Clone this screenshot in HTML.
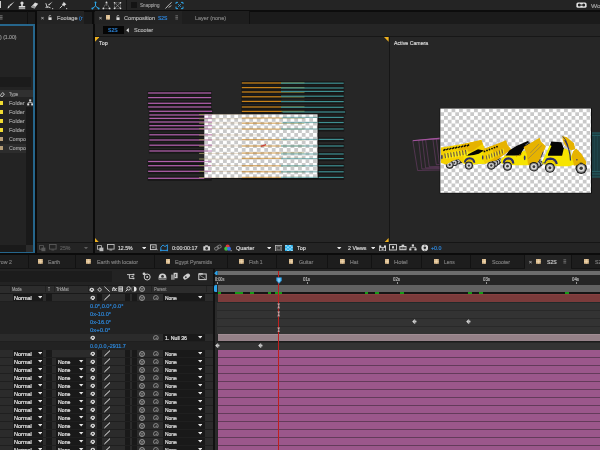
<!DOCTYPE html>
<html><head><meta charset="utf-8"><title>After Effects</title>
<style>
html,body{margin:0;padding:0;background:#0b0b0b;}
#r{position:relative;width:600px;height:450px;overflow:hidden;background:#0b0b0b;filter:blur(0.3px);font-family:"Liberation Sans",sans-serif;font-size:6px;color:#a8a8a8;}
.a{position:absolute;display:block}
.t{position:absolute;white-space:nowrap;line-height:8px;height:8px;transform-origin:0 50%;-webkit-text-stroke:0.2px;}
</style></head><body><div id="r">
<div class="a" style="left:0px;top:0px;width:600px;height:10.4px;background:#242424;"></div>
<div class="a" style="left:0px;top:10.4px;width:600px;height:1.2px;background:#0c0c0c;"></div>
<div class="a" style="left:0px;top:11.6px;width:600px;height:12.4px;background:#1b1b1b;"></div>
<svg class="a" style="left:7.2px;top:0.8px;" width="8" height="9" viewBox="0 0 8 9"><path d="M7.5 0.5 L3.5 5 L2.5 4 Z" fill="#ddd"/><path d="M0.5 7.5 Q2 7.5 3 5 L2 4.2 Q0.8 5.5 0.5 7.5Z" fill="#ddd"/></svg>
<svg class="a" style="left:18px;top:0.8px;" width="8" height="9" viewBox="0 0 8 9"><circle cx="4" cy="2" r="1.6" fill="#ddd"/><rect x="3.2" y="3" width="1.6" height="2.4" fill="#ddd"/><rect x="0.8" y="5" width="6.4" height="1.6" fill="#ddd"/><rect x="0.8" y="7.3" width="6.4" height="0.8" fill="#ddd"/></svg>
<svg class="a" style="left:30px;top:0.8px;" width="9" height="9" viewBox="0 0 9 9"><path d="M1 6 L5 1.5 L8.2 2.8 L4.4 7.4 Z" fill="#ddd"/><path d="M1 6 L2.6 4.3 L5.8 5.7 L4.4 7.4Z" fill="#999"/></svg>
<svg class="a" style="left:44.5px;top:0.8px;" width="9" height="9" viewBox="0 0 9 9"><path d="M7.8 0.5 L4 4.5 L3 3.8 Z" fill="#ddd"/><path d="M0.8 2.2 L2.4 6.8 M0.5 6.4 Q3 5 5.5 6.8" stroke="#ddd" stroke-width="0.9" fill="none"/><rect x="7" y="7" width="1.2" height="1.2" fill="#aaa"/></svg>
<svg class="a" style="left:59px;top:0.8px;" width="9" height="9" viewBox="0 0 9 9"><path d="M4.6 0.8 L7.4 3.4 L6 4 L5.4 5.6 L2.6 3 L4.2 2.4 Z" fill="#ddd"/><path d="M3.6 4.4 L0.8 7.2" stroke="#ddd" stroke-width="0.9"/><rect x="7" y="7" width="1.2" height="1.2" fill="#aaa"/></svg>
<div class="a" style="left:0px;top:1px;width:1.2px;height:7px;background:#cfcfcf;"></div>
<svg class="a" style="left:91px;top:1px;" width="9" height="9" viewBox="0 0 9 9"><path d="M4.5 1.2 V5 L1.5 7.4 M4.5 5 L7.5 7.4" stroke="#2ea5e6" stroke-width="1" fill="none"/><circle cx="4.5" cy="1.4" r="1" fill="#2ea5e6"/><circle cx="1.4" cy="7.4" r="1" fill="#2ea5e6"/><circle cx="7.6" cy="7.4" r="1" fill="#2ea5e6"/></svg>
<svg class="a" style="left:102px;top:1px;" width="9" height="9" viewBox="0 0 9 9"><path d="M4.5 1.2 L1.5 7.4 H7.5 Z M4.5 1.2 V5" stroke="#a8a8a8" stroke-width="0.6" fill="none" stroke-dasharray="1 0.6"/><circle cx="4.5" cy="1.4" r="0.9" fill="#ddd"/><circle cx="1.4" cy="7.4" r="0.9" fill="#ddd"/><circle cx="7.6" cy="7.4" r="0.9" fill="#ddd"/></svg>
<svg class="a" style="left:112.5px;top:1px;" width="9" height="9" viewBox="0 0 9 9"><rect x="1.5" y="1.8" width="6" height="5.6" stroke="#a8a8a8" stroke-width="0.6" fill="none" stroke-dasharray="1 0.6"/><path d="M1.5 1.8 L7.5 7.4 M7.5 1.8 L1.5 7.4" stroke="#a0a0a0" stroke-width="0.6"/><circle cx="1.5" cy="1.8" r="0.8" fill="#ddd"/><circle cx="7.5" cy="1.8" r="0.8" fill="#ddd"/><circle cx="1.5" cy="7.4" r="0.8" fill="#ddd"/><circle cx="7.5" cy="7.4" r="0.8" fill="#ddd"/></svg>
<div class="a" style="left:125.5px;top:0px;width:0.6px;height:10px;background:#161616;"></div>
<div class="a" style="left:131px;top:1.5px;width:6px;height:6px;background:#141414;"></div>
<span class="t" style="left:139.5px;top:1.4px;font-size:6px;color:#999999;transform:scaleX(0.769);">Snapping</span>
<svg class="a" style="left:163.5px;top:0.8px;" width="9" height="9" viewBox="0 0 9 9"><path d="M1.5 7.5 L5.5 3.2 L7.6 1.4" stroke="#cfcfcf" stroke-width="0.9" fill="none"/><path d="M4.6 6.4 L7.4 4.6" stroke="#cfcfcf" stroke-width="0.8"/></svg>
<svg class="a" style="left:175px;top:0.8px;" width="9" height="9" viewBox="0 0 9 9"><path d="M1 3 V1.4 H3 M6 1.4 H8 V3 M8 5.6 V7.6 H6 M3 7.6 H1 V5.6" stroke="#2ea5e6" stroke-width="1" fill="none"/><path d="M3 3 L6 6 M6 3 L3 6" stroke="#2ea5e6" stroke-width="0.7"/></svg>
<svg class="a" style="left:575.5px;top:2.4px;" width="11" height="7" viewBox="0 0 11 7"><rect x="0.4" y="0.4" width="10.2" height="5.4" rx="1.6" fill="#e6e6e6"/><circle cx="3.3" cy="3.1" r="1.5" fill="#222"/><circle cx="7.7" cy="3.1" r="1.5" fill="#222"/><rect x="4.4" y="2.6" width="2.2" height="1" fill="#222"/></svg>
<span class="t" style="left:591px;top:2px;font-size:6px;color:#a0a0a0;transform:scaleX(1.102);">Wor</span>
<div class="a" style="left:0px;top:23.9px;width:34.8px;height:229.7px;background:#26668c;"></div>
<div class="a" style="left:0px;top:25.7px;width:33px;height:226.1px;background:#232323;"></div>
<svg class="a" style="left:0px;top:15.4px;" width="3" height="5" viewBox="0 0 3 5"><path d="M0 0.8 H2.6 M0 2.4 H2.6 M0 4 H2.6" stroke="#8a8a8a" stroke-width="0.8"/></svg>
<div class="a" style="left:26.5px;top:11px;width:0.6px;height:13px;background:#101010;"></div>
<span class="t" style="left:-0.5px;top:32.6px;font-size:6px;color:#9a9a9a;transform:scaleX(0.853);">) (1.00)</span>
<div class="a" style="left:0px;top:77.3px;width:31px;height:9.4px;background:#1b1b1b;"></div>
<div class="a" style="left:0px;top:90px;width:33px;height:7.4px;background:#303030;"></div>
<svg class="a" style="left:0px;top:90.5px;" width="5" height="6.5" viewBox="0 0 5 6.5"><path d="M0.2 4.6 L2.6 1.6 L4.4 3 L2 6 Z" stroke="#c8c8c8" stroke-width="0.9" fill="none"/></svg>
<span class="t" style="left:8.6px;top:90px;font-size:5.6px;color:#9c9c9c;transform:scaleX(0.758);">Type</span>
<div class="a" style="left:26px;top:106.5px;width:7px;height:138.5px;background:#191919;"></div>
<svg class="a" style="left:26.6px;top:99.2px;" width="6.4" height="7" viewBox="0 0 6.4 7"><rect x="2.2" y="0.4" width="2" height="2" fill="#ddd"/><rect x="0.2" y="4.4" width="2" height="2" fill="#ddd"/><rect x="4.2" y="4.4" width="2" height="2" fill="#ddd"/><path d="M3.2 2.4 V3.6 M1.2 4.4 V3.5 H5.2 V4.4" stroke="#ddd" stroke-width="0.6" fill="none"/></svg>
<div class="a" style="left:0px;top:144.2px;width:26px;height:8.4px;background:#2c2c2c;"></div>
<div class="a" style="left:0px;top:101.3px;width:3.2px;height:4.2px;background:#f0dc32;"></div>
<span class="t" style="left:9px;top:99.4px;font-size:6px;color:#9c9c9c;transform:scaleX(0.917);">Folder</span>
<div class="a" style="left:0px;top:110.3px;width:3.2px;height:4.2px;background:#f0dc32;"></div>
<span class="t" style="left:9px;top:108.4px;font-size:6px;color:#9c9c9c;transform:scaleX(0.917);">Folder</span>
<div class="a" style="left:0px;top:119.3px;width:3.2px;height:4.2px;background:#f0dc32;"></div>
<span class="t" style="left:9px;top:117.4px;font-size:6px;color:#9c9c9c;transform:scaleX(0.917);">Folder</span>
<div class="a" style="left:0px;top:128.3px;width:3.2px;height:4.2px;background:#f0dc32;"></div>
<span class="t" style="left:9px;top:126.4px;font-size:6px;color:#9c9c9c;transform:scaleX(0.917);">Folder</span>
<div class="a" style="left:0px;top:137.3px;width:3.2px;height:4.2px;background:#b89f78;"></div>
<span class="t" style="left:9px;top:135.4px;font-size:6px;color:#9c9c9c;transform:scaleX(0.869);">Compo</span>
<div class="a" style="left:0px;top:146.3px;width:3.2px;height:4.2px;background:#b89f78;"></div>
<span class="t" style="left:9px;top:144.4px;font-size:6px;color:#9c9c9c;transform:scaleX(0.869);">Compo</span>
<div class="a" style="left:0px;top:245px;width:33px;height:6.8px;background:#1a1a1a;"></div>
<div class="a" style="left:26px;top:245px;width:7px;height:6.8px;background:#2b2b2b;"></div>
<div class="a" style="left:34.5px;top:11px;width:2px;height:243px;background:#0b0b0b;"></div>
<div class="a" style="left:92.3px;top:11px;width:2.1px;height:243px;background:#0b0b0b;"></div>
<div class="a" style="left:36.5px;top:11px;width:47px;height:13px;background:#232323;"></div>
<div class="a" style="left:36.5px;top:24px;width:56px;height:218.4px;background:#262626;"></div>
<span class="t" style="left:41px;top:13.6px;font-size:6px;color:#9a9a9a;transform:scaleX(0.856);">×</span>
<svg class="a" style="left:48.4px;top:15px;" width="4.2" height="5.4" viewBox="0 0 5 6.5"><path d="M1.2 3 V1.8 Q1.2 0.5 2.4 0.5 Q3.4 0.5 3.6 1.4" stroke="#d8d8d8" stroke-width="0.8" fill="none"/><rect x="0.5" y="2.8" width="3.8" height="3.2" fill="#d8d8d8"/></svg>
<span class="t" style="left:56.5px;top:13.6px;font-size:6px;color:#b4b4b4;transform:scaleX(0.931);">Footage</span>
<span class="t" style="left:78.8px;top:13.6px;font-size:6px;color:#2d7fd0;transform:scaleX(0.901);">(r</span>
<div class="a" style="left:36.5px;top:242.4px;width:56px;height:0.8px;background:#151515;"></div>
<div class="a" style="left:36.5px;top:243.2px;width:56px;height:9.4px;background:#242424;"></div>
<svg class="a" style="left:38.6px;top:244.6px;" width="7" height="7" viewBox="0 0 7 7"><rect x="0.5" y="0.6" width="4" height="3.6" fill="none" stroke="#5a5a5a" stroke-width="0.8"/><rect x="2.4" y="2.6" width="4" height="3.6" fill="#5a5a5a"/></svg>
<svg class="a" style="left:48.6px;top:244.4px;" width="8" height="7" viewBox="0 0 8 7"><rect x="0.5" y="0.5" width="6.6" height="4.6" fill="none" stroke="#5a5a5a" stroke-width="0.9"/><rect x="2.4" y="5.6" width="2.8" height="0.8" fill="#5a5a5a"/></svg>
<span class="t" style="left:60.4px;top:244.2px;font-size:6px;color:#5c5c5c;transform:scaleX(0.874);">25%</span>
<svg class="a" style="left:83.6px;top:247px;" width="4" height="2.4" viewBox="0 0 4 2.4"><path d="M0 0 H4 L2.0 2.4 Z" fill="#5e5e5e"/></svg>
<div class="a" style="left:94.5px;top:11px;width:87.5px;height:13px;background:#232323;"></div>
<div class="a" style="left:182px;top:11px;width:67px;height:13px;background:#1e1e1e;"></div>
<div class="a" style="left:249px;top:11px;width:0.6px;height:13px;background:#111;"></div>
<div class="a" style="left:94.5px;top:24px;width:505.5px;height:12px;background:#252525;"></div>
<div class="a" style="left:94.5px;top:36px;width:505.5px;height:1px;background:#171717;"></div>
<span class="t" style="left:98.6px;top:13.6px;font-size:6px;color:#9a9a9a;transform:scaleX(0.856);">×</span>
<svg class="a" style="left:105.6px;top:15.2px;" width="4.6" height="4.6" viewBox="0 0 4.6 4.6"><rect width="4.6" height="4.6" fill="#d8b98c"/><path d="M2.3 0 V4.6 M0 2.3 H4.6" stroke="#f3dfbd" stroke-width="0.5"/></svg>
<svg class="a" style="left:116.2px;top:15px;" width="4.2" height="5.4" viewBox="0 0 5 6.5"><path d="M1.2 3 V1.8 Q1.2 0.5 2.4 0.5 Q3.4 0.5 3.6 1.4" stroke="#d8d8d8" stroke-width="0.8" fill="none"/><rect x="0.5" y="2.8" width="3.8" height="3.2" fill="#d8d8d8"/></svg>
<span class="t" style="left:124.4px;top:13.6px;font-size:6px;color:#b4b4b4;transform:scaleX(0.930);">Composition</span>
<span class="t" style="left:157.8px;top:13.6px;font-size:6px;color:#2d86dc;transform:scaleX(0.829);">S2S</span>
<svg class="a" style="left:174.6px;top:15.4px;" width="3.6" height="5" viewBox="0 0 3.6 5"><path d="M0.4 0.8 H3.2 M0.4 2.4 H3.2 M0.4 4 H3.2" stroke="#8a8a8a" stroke-width="0.7"/></svg>
<span class="t" style="left:195px;top:13.6px;font-size:6px;color:#808080;transform:scaleX(0.911);">Layer (none)</span>
<div class="a" style="left:103px;top:26.4px;width:21px;height:7.8px;background:#050505;"></div>
<span class="t" style="left:108px;top:26.4px;font-size:6px;color:#2d86dc;transform:scaleX(0.846);">S2S</span>
<svg class="a" style="left:126.4px;top:28.2px;" width="3" height="4.4" viewBox="0 0 3 4.4"><path d="M2.8 0 V4.4 L0.2 2.2 Z" fill="#dcdcdc"/></svg>
<span class="t" style="left:134.2px;top:26.4px;font-size:6px;color:#b0b0b0;transform:scaleX(0.929);">Scooter</span>
<div class="a" style="left:94.5px;top:37px;width:294px;height:205.4px;background:#262626;"></div>
<div class="a" style="left:388.5px;top:37px;width:1.2px;height:205.4px;background:#161616;"></div>
<div class="a" style="left:389.7px;top:37px;width:210.3px;height:205.4px;background:#262626;"></div>
<div class="a" style="left:94.5px;top:242.4px;width:505.5px;height:0.8px;background:#151515;"></div>
<div class="a" style="left:94.5px;top:243.2px;width:505.5px;height:9.4px;background:#242424;"></div>
<span class="t" style="left:99.2px;top:38.8px;font-size:6px;color:#d8d8d8;transform:scaleX(0.889);">Top</span>
<span class="t" style="left:394.4px;top:38.8px;font-size:6px;color:#d8d8d8;transform:scaleX(0.869);">Active Camera</span>
<svg class="a" style="left:94.5px;top:37px;" width="4.4" height="4.8" viewBox="0 0 4.4 4.8"><path d="M0 0 H4.4 L0 4.8 Z" fill="#eeb01e"/></svg>
<svg class="a" style="left:384px;top:37px;" width="4.6" height="4.8" viewBox="0 0 4.6 4.8"><path d="M0 0 H4.6 V4.8 Z" fill="#eeb01e"/></svg>
<svg class="a" style="left:94.5px;top:237.6px;" width="4.4" height="4.8" viewBox="0 0 4.4 4.8"><path d="M0 0 L4.4 4.8 H0 Z" fill="#eeb01e"/></svg>
<svg class="a" style="left:384px;top:237.6px;" width="4.6" height="4.8" viewBox="0 0 4.6 4.8"><path d="M4.6 0 V4.8 H0 Z" fill="#eeb01e"/></svg>
<svg class="a" style="left:94.5px;top:37px;" width="294" height="205.4" viewBox="94.5 37 294 205.4"><defs><pattern id="ck" x="203.8" y="114.3" width="7.5" height="7.5" patternUnits="userSpaceOnUse"><rect width="7.5" height="7.5" fill="#fff"/><rect x="3.75" width="3.75" height="3.75" fill="#c9c9c9"/><rect y="3.75" width="3.75" height="3.75" fill="#c9c9c9"/></pattern><clipPath id="cc"><rect x="203.8" y="114.3" width="113.19999999999999" height="63.7"/></clipPath></defs><g><rect x="147.1" y="91.1" width="64.1" height="4.4" fill="#171717"/><rect x="147.1" y="95.7" width="64.1" height="4.4" fill="#171717"/><rect x="147.1" y="101.4" width="64.1" height="4.4" fill="#171717"/><rect x="147.1" y="105.1" width="64.1" height="4.4" fill="#171717"/><rect x="148.3" y="109.4" width="63.8" height="4.4" fill="#171717"/><rect x="148.3" y="113.1" width="63.8" height="4.4" fill="#171717"/><rect x="148.3" y="116.5" width="63.8" height="4.4" fill="#171717"/><rect x="148.3" y="120.1" width="63.8" height="4.4" fill="#171717"/><rect x="148.3" y="123.8" width="63.8" height="4.4" fill="#171717"/><rect x="148.3" y="127.1" width="63.8" height="4.4" fill="#171717"/><rect x="148.3" y="132.9" width="63.8" height="4.4" fill="#171717"/><rect x="148.3" y="138.1" width="63.8" height="4.4" fill="#171717"/><rect x="148.3" y="143.3" width="63.8" height="4.4" fill="#171717"/><rect x="148.3" y="149.1" width="63.8" height="4.4" fill="#171717"/><rect x="147.1" y="159.6" width="64.1" height="4.4" fill="#171717"/><rect x="147.1" y="163.8" width="64.1" height="4.4" fill="#171717"/><rect x="147.1" y="169.4" width="64.1" height="4.4" fill="#171717"/><rect x="147.1" y="176.4" width="64.1" height="4.4" fill="#171717"/><rect x="240.8" y="81.1" width="40.2" height="4.4" fill="#171717"/><rect x="240.8" y="85.7" width="40.2" height="4.4" fill="#171717"/><rect x="240.8" y="90.1" width="40.2" height="4.4" fill="#171717"/><rect x="240.8" y="94.9" width="40.2" height="4.4" fill="#171717"/><rect x="240.8" y="99.5" width="40.2" height="4.4" fill="#171717"/><rect x="240.8" y="105.1" width="40.2" height="4.4" fill="#171717"/><rect x="240.8" y="109.5" width="40.2" height="4.4" fill="#171717"/><rect x="240.8" y="116.1" width="40.2" height="4.4" fill="#171717"/><rect x="240.8" y="121.3" width="40.2" height="4.4" fill="#171717"/><rect x="240.8" y="127.2" width="40.2" height="4.4" fill="#171717"/><rect x="240.8" y="137.7" width="40.2" height="4.4" fill="#171717"/><rect x="240.8" y="144.1" width="40.2" height="4.4" fill="#171717"/><rect x="240.8" y="151.1" width="40.2" height="4.4" fill="#171717"/><rect x="240.8" y="156.5" width="40.2" height="4.4" fill="#171717"/><rect x="240.8" y="163.9" width="40.2" height="4.4" fill="#171717"/><rect x="240.8" y="169.9" width="40.2" height="4.4" fill="#171717"/><rect x="240.8" y="175.5" width="40.2" height="4.4" fill="#171717"/><rect x="280" y="81.3" width="63.7" height="4.4" fill="#171717"/><rect x="280" y="86.1" width="63.7" height="4.4" fill="#171717"/><rect x="280" y="89.5" width="63.7" height="4.4" fill="#171717"/><rect x="280" y="94.3" width="63.7" height="4.4" fill="#171717"/><rect x="280" y="99.7" width="63.7" height="4.4" fill="#171717"/><rect x="280" y="105.4" width="63.7" height="4.4" fill="#171717"/><rect x="281.5" y="110.1" width="63.6" height="4.4" fill="#171717"/><rect x="281.5" y="115.5" width="62.2" height="4.4" fill="#171717"/><rect x="281.5" y="120.6" width="62.2" height="4.4" fill="#171717"/><rect x="280" y="127.1" width="63.7" height="4.4" fill="#171717"/><rect x="280" y="137.5" width="63.7" height="4.4" fill="#171717"/><rect x="280" y="144.1" width="63.7" height="4.4" fill="#171717"/><rect x="280" y="152.1" width="63.7" height="4.4" fill="#171717"/><rect x="280" y="156.7" width="63.7" height="4.4" fill="#171717"/><rect x="280" y="163.9" width="63.7" height="4.4" fill="#171717"/><rect x="280" y="169.9" width="63.7" height="4.4" fill="#171717"/><rect x="280" y="175.5" width="63.7" height="4.4" fill="#171717"/></g><g><rect x="147.6" y="92.375" width="63.1" height="1.25" fill="#b05fab"/><rect x="147.6" y="96.975" width="63.1" height="1.25" fill="#b05fab"/><rect x="147.6" y="102.675" width="63.1" height="1.25" fill="#b05fab"/><rect x="147.6" y="106.375" width="63.1" height="1.25" fill="#b05fab"/><rect x="148.8" y="110.675" width="62.8" height="1.25" fill="#b05fab"/><rect x="148.8" y="114.375" width="62.8" height="1.25" fill="#b05fab"/><rect x="148.8" y="117.775" width="62.8" height="1.25" fill="#b05fab"/><rect x="148.8" y="121.375" width="62.8" height="1.25" fill="#b05fab"/><rect x="148.8" y="125.075" width="62.8" height="1.25" fill="#b05fab"/><rect x="148.8" y="128.375" width="62.8" height="1.25" fill="#b05fab"/><rect x="148.8" y="134.175" width="62.8" height="1.25" fill="#b05fab"/><rect x="148.8" y="139.375" width="62.8" height="1.25" fill="#b05fab"/><rect x="148.8" y="144.575" width="62.8" height="1.25" fill="#b05fab"/><rect x="148.8" y="150.375" width="62.8" height="1.25" fill="#b05fab"/><rect x="147.6" y="160.875" width="63.1" height="1.25" fill="#b05fab"/><rect x="147.6" y="165.075" width="63.1" height="1.25" fill="#b05fab"/><rect x="147.6" y="170.675" width="63.1" height="1.25" fill="#b05fab"/><rect x="147.6" y="177.675" width="63.1" height="1.25" fill="#b05fab"/><rect x="241.3" y="82.375" width="39.2" height="1.25" fill="#c98219"/><rect x="280.5" y="82.38" width="23.5" height="1.25" fill="#8a8a40"/><rect x="241.3" y="86.975" width="39.2" height="1.25" fill="#c98219"/><rect x="280.5" y="86.98" width="23.5" height="1.25" fill="#8a8a40"/><rect x="241.3" y="91.375" width="39.2" height="1.25" fill="#c98219"/><rect x="280.5" y="91.38" width="23.5" height="1.25" fill="#8a8a40"/><rect x="241.3" y="96.175" width="39.2" height="1.25" fill="#c98219"/><rect x="280.5" y="96.18" width="23.5" height="1.25" fill="#8a8a40"/><rect x="241.3" y="100.775" width="39.2" height="1.25" fill="#c98219"/><rect x="280.5" y="100.78" width="23.5" height="1.25" fill="#8a8a40"/><rect x="241.3" y="106.375" width="39.2" height="1.25" fill="#c98219"/><rect x="280.5" y="106.38" width="23.5" height="1.25" fill="#8a8a40"/><rect x="241.3" y="110.775" width="39.2" height="1.25" fill="#c98219"/><rect x="280.5" y="110.78" width="23.5" height="1.25" fill="#8a8a40"/><rect x="241.3" y="117.375" width="39.2" height="1.25" fill="#c98219"/><rect x="280.5" y="117.38" width="23.5" height="1.25" fill="#8a8a40"/><rect x="241.3" y="122.575" width="39.2" height="1.25" fill="#c98219"/><rect x="280.5" y="122.58" width="23.5" height="1.25" fill="#8a8a40"/><rect x="241.3" y="128.475" width="39.2" height="1.25" fill="#c98219"/><rect x="280.5" y="128.48" width="23.5" height="1.25" fill="#8a8a40"/><rect x="241.3" y="138.975" width="39.2" height="1.25" fill="#c98219"/><rect x="280.5" y="138.98" width="23.5" height="1.25" fill="#8a8a40"/><rect x="241.3" y="145.375" width="39.2" height="1.25" fill="#c98219"/><rect x="280.5" y="145.38" width="23.5" height="1.25" fill="#8a8a40"/><rect x="241.3" y="152.375" width="39.2" height="1.25" fill="#c98219"/><rect x="280.5" y="152.38" width="23.5" height="1.25" fill="#8a8a40"/><rect x="241.3" y="157.775" width="39.2" height="1.25" fill="#c98219"/><rect x="280.5" y="157.78" width="23.5" height="1.25" fill="#8a8a40"/><rect x="241.3" y="165.175" width="39.2" height="1.25" fill="#c98219"/><rect x="280.5" y="165.18" width="23.5" height="1.25" fill="#8a8a40"/><rect x="241.3" y="171.175" width="39.2" height="1.25" fill="#c98219"/><rect x="280.5" y="171.18" width="23.5" height="1.25" fill="#8a8a40"/><rect x="241.3" y="176.775" width="39.2" height="1.25" fill="#c98219"/><rect x="280.5" y="176.78" width="23.5" height="1.25" fill="#8a8a40"/><rect x="280.5" y="82.6" width="62.7" height="1.2" fill="#3e8f91"/><rect x="280.5" y="87.4" width="62.7" height="1.2" fill="#3e8f91"/><rect x="280.5" y="90.8" width="62.7" height="1.2" fill="#3e8f91"/><rect x="280.5" y="95.6" width="62.7" height="1.2" fill="#3e8f91"/><rect x="280.5" y="101" width="62.7" height="1.2" fill="#3e8f91"/><rect x="280.5" y="106.7" width="62.7" height="1.2" fill="#3e8f91"/><rect x="282" y="111.4" width="62.6" height="1.2" fill="#3e8f91"/><rect x="282" y="116.8" width="61.2" height="1.2" fill="#3e8f91"/><rect x="282" y="121.9" width="61.2" height="1.2" fill="#3e8f91"/><rect x="280.5" y="128.4" width="62.7" height="1.2" fill="#3e8f91"/><rect x="280.5" y="138.8" width="62.7" height="1.2" fill="#3e8f91"/><rect x="280.5" y="145.4" width="62.7" height="1.2" fill="#3e8f91"/><rect x="280.5" y="153.4" width="62.7" height="1.2" fill="#3e8f91"/><rect x="280.5" y="158" width="62.7" height="1.2" fill="#3e8f91"/><rect x="280.5" y="165.2" width="62.7" height="1.2" fill="#3e8f91"/><rect x="280.5" y="171.2" width="62.7" height="1.2" fill="#3e8f91"/><rect x="280.5" y="176.8" width="62.7" height="1.2" fill="#3e8f91"/><rect x="198.6" y="114" width="5.4" height="1" fill="#8f8a58"/><rect x="198.6" y="118.2" width="5.4" height="1" fill="#8f8a58"/><rect x="198.6" y="122.5" width="5.4" height="1" fill="#8f8a58"/><rect x="198.6" y="128.1" width="5.4" height="1" fill="#8f8a58"/><rect x="198.6" y="134.5" width="5.4" height="1" fill="#8f8a58"/><rect x="198.6" y="139.2" width="5.4" height="1" fill="#8f8a58"/><rect x="198.6" y="145.5" width="5.4" height="1" fill="#8f8a58"/><rect x="198.6" y="152.9" width="5.4" height="1" fill="#8f8a58"/><rect x="198.6" y="158.5" width="5.4" height="1" fill="#8f8a58"/><rect x="198.6" y="165" width="5.4" height="1" fill="#8f8a58"/><rect x="198.6" y="171" width="5.4" height="1" fill="#8f8a58"/><rect x="198.6" y="177.1" width="5.4" height="1" fill="#8f8a58"/></g><rect x="203.8" y="114.3" width="114.19999999999999" height="64.5" fill="#0e0e0e"/><rect x="203.8" y="114.3" width="113.19999999999999" height="63.7" fill="url(#ck)"/><g clip-path="url(#cc)" opacity="0.28"><rect x="204" y="114" width="58" height="1" fill="#b08a50"/><rect x="204" y="118.2" width="58" height="1" fill="#b08a50"/><rect x="204" y="122.5" width="58" height="1" fill="#b08a50"/><rect x="204" y="128.1" width="58" height="1" fill="#b08a50"/><rect x="204" y="134.5" width="58" height="1" fill="#b08a50"/><rect x="204" y="139.2" width="58" height="1" fill="#b08a50"/><rect x="204" y="145.5" width="58" height="1" fill="#b08a50"/><rect x="204" y="152.9" width="58" height="1" fill="#b08a50"/><rect x="204" y="158.5" width="58" height="1" fill="#b08a50"/><rect x="204" y="165" width="58" height="1" fill="#b08a50"/><rect x="204" y="171" width="58" height="1" fill="#b08a50"/><rect x="204" y="177.1" width="58" height="1" fill="#b08a50"/></g><g clip-path="url(#cc)" opacity="0.6"><rect x="147.6" y="92.375" width="63.1" height="1.25" fill="#b05fab"/><rect x="147.6" y="96.975" width="63.1" height="1.25" fill="#b05fab"/><rect x="147.6" y="102.675" width="63.1" height="1.25" fill="#b05fab"/><rect x="147.6" y="106.375" width="63.1" height="1.25" fill="#b05fab"/><rect x="148.8" y="110.675" width="62.8" height="1.25" fill="#b05fab"/><rect x="148.8" y="114.375" width="62.8" height="1.25" fill="#b05fab"/><rect x="148.8" y="117.775" width="62.8" height="1.25" fill="#b05fab"/><rect x="148.8" y="121.375" width="62.8" height="1.25" fill="#b05fab"/><rect x="148.8" y="125.075" width="62.8" height="1.25" fill="#b05fab"/><rect x="148.8" y="128.375" width="62.8" height="1.25" fill="#b05fab"/><rect x="148.8" y="134.175" width="62.8" height="1.25" fill="#b05fab"/><rect x="148.8" y="139.375" width="62.8" height="1.25" fill="#b05fab"/><rect x="148.8" y="144.575" width="62.8" height="1.25" fill="#b05fab"/><rect x="148.8" y="150.375" width="62.8" height="1.25" fill="#b05fab"/><rect x="147.6" y="160.875" width="63.1" height="1.25" fill="#b05fab"/><rect x="147.6" y="165.075" width="63.1" height="1.25" fill="#b05fab"/><rect x="147.6" y="170.675" width="63.1" height="1.25" fill="#b05fab"/><rect x="147.6" y="177.675" width="63.1" height="1.25" fill="#b05fab"/><rect x="241.3" y="82.375" width="39.2" height="1.25" fill="#c98219"/><rect x="280.5" y="82.38" width="23.5" height="1.25" fill="#8a8a40"/><rect x="241.3" y="86.975" width="39.2" height="1.25" fill="#c98219"/><rect x="280.5" y="86.98" width="23.5" height="1.25" fill="#8a8a40"/><rect x="241.3" y="91.375" width="39.2" height="1.25" fill="#c98219"/><rect x="280.5" y="91.38" width="23.5" height="1.25" fill="#8a8a40"/><rect x="241.3" y="96.175" width="39.2" height="1.25" fill="#c98219"/><rect x="280.5" y="96.18" width="23.5" height="1.25" fill="#8a8a40"/><rect x="241.3" y="100.775" width="39.2" height="1.25" fill="#c98219"/><rect x="280.5" y="100.78" width="23.5" height="1.25" fill="#8a8a40"/><rect x="241.3" y="106.375" width="39.2" height="1.25" fill="#c98219"/><rect x="280.5" y="106.38" width="23.5" height="1.25" fill="#8a8a40"/><rect x="241.3" y="110.775" width="39.2" height="1.25" fill="#c98219"/><rect x="280.5" y="110.78" width="23.5" height="1.25" fill="#8a8a40"/><rect x="241.3" y="117.375" width="39.2" height="1.25" fill="#c98219"/><rect x="280.5" y="117.38" width="23.5" height="1.25" fill="#8a8a40"/><rect x="241.3" y="122.575" width="39.2" height="1.25" fill="#c98219"/><rect x="280.5" y="122.58" width="23.5" height="1.25" fill="#8a8a40"/><rect x="241.3" y="128.475" width="39.2" height="1.25" fill="#c98219"/><rect x="280.5" y="128.48" width="23.5" height="1.25" fill="#8a8a40"/><rect x="241.3" y="138.975" width="39.2" height="1.25" fill="#c98219"/><rect x="280.5" y="138.98" width="23.5" height="1.25" fill="#8a8a40"/><rect x="241.3" y="145.375" width="39.2" height="1.25" fill="#c98219"/><rect x="280.5" y="145.38" width="23.5" height="1.25" fill="#8a8a40"/><rect x="241.3" y="152.375" width="39.2" height="1.25" fill="#c98219"/><rect x="280.5" y="152.38" width="23.5" height="1.25" fill="#8a8a40"/><rect x="241.3" y="157.775" width="39.2" height="1.25" fill="#c98219"/><rect x="280.5" y="157.78" width="23.5" height="1.25" fill="#8a8a40"/><rect x="241.3" y="165.175" width="39.2" height="1.25" fill="#c98219"/><rect x="280.5" y="165.18" width="23.5" height="1.25" fill="#8a8a40"/><rect x="241.3" y="171.175" width="39.2" height="1.25" fill="#c98219"/><rect x="280.5" y="171.18" width="23.5" height="1.25" fill="#8a8a40"/><rect x="241.3" y="176.775" width="39.2" height="1.25" fill="#c98219"/><rect x="280.5" y="176.78" width="23.5" height="1.25" fill="#8a8a40"/><rect x="280.5" y="82.6" width="62.7" height="1.2" fill="#3e8f91"/><rect x="280.5" y="87.4" width="62.7" height="1.2" fill="#3e8f91"/><rect x="280.5" y="90.8" width="62.7" height="1.2" fill="#3e8f91"/><rect x="280.5" y="95.6" width="62.7" height="1.2" fill="#3e8f91"/><rect x="280.5" y="101" width="62.7" height="1.2" fill="#3e8f91"/><rect x="280.5" y="106.7" width="62.7" height="1.2" fill="#3e8f91"/><rect x="282" y="111.4" width="62.6" height="1.2" fill="#3e8f91"/><rect x="282" y="116.8" width="61.2" height="1.2" fill="#3e8f91"/><rect x="282" y="121.9" width="61.2" height="1.2" fill="#3e8f91"/><rect x="280.5" y="128.4" width="62.7" height="1.2" fill="#3e8f91"/><rect x="280.5" y="138.8" width="62.7" height="1.2" fill="#3e8f91"/><rect x="280.5" y="145.4" width="62.7" height="1.2" fill="#3e8f91"/><rect x="280.5" y="153.4" width="62.7" height="1.2" fill="#3e8f91"/><rect x="280.5" y="158" width="62.7" height="1.2" fill="#3e8f91"/><rect x="280.5" y="165.2" width="62.7" height="1.2" fill="#3e8f91"/><rect x="280.5" y="171.2" width="62.7" height="1.2" fill="#3e8f91"/><rect x="280.5" y="176.8" width="62.7" height="1.2" fill="#3e8f91"/><rect x="198.6" y="114" width="5.4" height="1" fill="#8f8a58"/><rect x="198.6" y="118.2" width="5.4" height="1" fill="#8f8a58"/><rect x="198.6" y="122.5" width="5.4" height="1" fill="#8f8a58"/><rect x="198.6" y="128.1" width="5.4" height="1" fill="#8f8a58"/><rect x="198.6" y="134.5" width="5.4" height="1" fill="#8f8a58"/><rect x="198.6" y="139.2" width="5.4" height="1" fill="#8f8a58"/><rect x="198.6" y="145.5" width="5.4" height="1" fill="#8f8a58"/><rect x="198.6" y="152.9" width="5.4" height="1" fill="#8f8a58"/><rect x="198.6" y="158.5" width="5.4" height="1" fill="#8f8a58"/><rect x="198.6" y="165" width="5.4" height="1" fill="#8f8a58"/><rect x="198.6" y="171" width="5.4" height="1" fill="#8f8a58"/><rect x="198.6" y="177.1" width="5.4" height="1" fill="#8f8a58"/></g><path d="M260.4 146.4 L265.6 144.6" stroke="#c8413a" stroke-width="1.2"/></svg>
<svg class="a" style="left:389.7px;top:37px;" width="210.3" height="205.4" viewBox="389.7 37 210.3 205.4"><defs><pattern id="ck2" x="440" y="108.5" width="7.5" height="7.5" patternUnits="userSpaceOnUse"><rect width="7.5" height="7.5" fill="#fff"/><rect x="3.75" width="3.75" height="3.75" fill="#c9c9c9"/><rect y="3.75" width="3.75" height="3.75" fill="#c9c9c9"/></pattern></defs><path d="M440 138.0 L412.5 140.7 L417.3 170.5 L440 170.0" stroke="#8a4786" stroke-width="0.7" fill="none" opacity="0.62"/><path d="M440 138.3 L418.4 140.3 L421.6 169.0 L440 168.5" stroke="#8a4786" stroke-width="0.7" fill="none" opacity="0.62"/><path d="M440 138.5 L422.1 140.0 L425.3 167.9 L440 167.4" stroke="#8a4786" stroke-width="0.7" fill="none" opacity="0.62"/><path d="M440 138.7 L425.3 139.8 L429.0 166.8 L440 166.3" stroke="#8a4786" stroke-width="0.7" fill="none" opacity="0.62"/><path d="M440 138.9 L432.6 139.3 L436.0 164.7 L440 164.4" stroke="#8a4786" stroke-width="0.7" fill="none" opacity="0.62"/><path d="M440 139.0 L436.0 139.0 L439.0 163.2 L440 163.0" stroke="#8a4786" stroke-width="0.7" fill="none" opacity="0.62"/><path d="M412.5 140.7 L440 138.2" stroke="#a555a0" stroke-width="1"/><rect x="591.4" y="132.4" width="9" height="45.2" fill="#1b3a3e"/><path d="M591.4 133 H600 M591.4 135.4 H600 M591.4 171.4 H600 M591.4 174 H600 M591.4 177 H600" stroke="#2a686d" stroke-width="0.8"/><path d="M594 136 V171 M597 136 V171" stroke="#224e53" stroke-width="0.7"/><rect x="439.4" y="108.1" width="152.30000000000004" height="85.30000000000001" fill="#0c0c0c"/><rect x="440" y="108.5" width="150.70000000000005" height="84.30000000000001" fill="url(#ck2)"/><circle cx="460" cy="160.6" r="2.6" fill="#1a1a1a"/><circle cx="460" cy="160.6" r="2.028" fill="#8c8c8c"/><circle cx="460" cy="160.6" r="1.508" fill="#dedede"/><circle cx="460" cy="160.6" r="0.78" fill="#3a3a3a"/><circle cx="457.4" cy="161.5" r="3" fill="#1a1a1a"/><circle cx="457.4" cy="161.5" r="2.34" fill="#8c8c8c"/><circle cx="457.4" cy="161.5" r="1.74" fill="#dedede"/><circle cx="457.4" cy="161.5" r="0.9" fill="#3a3a3a"/><circle cx="454" cy="162.7" r="3.4" fill="#1a1a1a"/><circle cx="454" cy="162.7" r="2.652" fill="#8c8c8c"/><circle cx="454" cy="162.7" r="1.972" fill="#dedede"/><circle cx="454" cy="162.7" r="1.02" fill="#3a3a3a"/><circle cx="449.4" cy="164.8" r="3.9" fill="#1a1a1a"/><circle cx="449.4" cy="164.8" r="3.042" fill="#8c8c8c"/><circle cx="449.4" cy="164.8" r="2.262" fill="#dedede"/><circle cx="449.4" cy="164.8" r="1.17" fill="#3a3a3a"/><polygon points="440.6,147.6 450,146 467.6,143 481,140 482.4,143.6 485.5,151 486,163.6 470,164.4 463,163.6 458,159 452,161 446,164.4 440.6,163" fill="#f3cf00" /><path d="M442 146 L481 138.6 M446 143.6 L476 138" stroke="#d8d8e4" stroke-width="0.6" opacity="0.8"/><ellipse cx="441.6" cy="157" rx="0.8" ry="2.2" fill="#2c2e6a"/><polygon points="462,144.2 481,140 482.4,143.8 472,151 464,152 458,150" fill="#e6b300" /><polygon points="463.3,156 467,152.5 478,151 486,151.5 486,163.6 470,164.4 463.3,163.4" fill="#f6e400" /><polygon points="466,155.2 471.8,152.2 477.7,149.2 483.8,150.4 478.5,153.8 473.5,155 467,155.8" fill="#050505" /><path d="M443 150.6 l2.2 -1.5" stroke="#0a0a0a" stroke-width="1.4"/><path d="M445.95 150.04 l2.2 -1.5" stroke="#0a0a0a" stroke-width="1.4"/><path d="M448.9 149.48 l2.2 -1.5" stroke="#0a0a0a" stroke-width="1.4"/><path d="M451.85 148.92 l2.2 -1.5" stroke="#0a0a0a" stroke-width="1.4"/><path d="M454.8 148.36 l2.2 -1.5" stroke="#0a0a0a" stroke-width="1.4"/><path d="M457.75 147.8 l2.2 -1.5" stroke="#0a0a0a" stroke-width="1.4"/><path d="M460.7 147.24 l2.2 -1.5" stroke="#0a0a0a" stroke-width="1.4"/><path d="M463.65 146.68 l2.2 -1.5" stroke="#0a0a0a" stroke-width="1.4"/><path d="M466.6 146.12 l2.2 -1.5" stroke="#0a0a0a" stroke-width="1.4"/><path d="M445.8 152.9 l0.8 6" stroke="#f8ee20" stroke-width="1.1"/><path d="M444.5 153.5 l0.7 4.6" stroke="#2c2e6a" stroke-width="0.9" opacity="0.85"/><path d="M448.75 152.4 l0.8 6" stroke="#f8ee20" stroke-width="1.1"/><path d="M447.45 153 l0.7 4.6" stroke="#2c2e6a" stroke-width="0.9" opacity="0.85"/><path d="M451.7 151.9 l0.8 6" stroke="#f8ee20" stroke-width="1.1"/><path d="M450.4 152.5 l0.7 4.6" stroke="#2c2e6a" stroke-width="0.9" opacity="0.85"/><path d="M454.65 151.4 l0.8 6" stroke="#f8ee20" stroke-width="1.1"/><path d="M453.35 152 l0.7 4.6" stroke="#2c2e6a" stroke-width="0.9" opacity="0.85"/><path d="M457.6 150.9 l0.8 6" stroke="#f8ee20" stroke-width="1.1"/><path d="M456.3 151.5 l0.7 4.6" stroke="#2c2e6a" stroke-width="0.9" opacity="0.85"/><path d="M460.55 150.4 l0.8 6" stroke="#f8ee20" stroke-width="1.1"/><path d="M459.25 151 l0.7 4.6" stroke="#2c2e6a" stroke-width="0.9" opacity="0.85"/><path d="M463.5 149.9 l0.8 6" stroke="#f8ee20" stroke-width="1.1"/><path d="M462.2 150.5 l0.7 4.6" stroke="#2c2e6a" stroke-width="0.9" opacity="0.85"/><path d="M466.45 149.4 l0.8 6" stroke="#f8ee20" stroke-width="1.1"/><path d="M465.15 150 l0.7 4.6" stroke="#2c2e6a" stroke-width="0.9" opacity="0.85"/><path d="M464.6 162.6 Q465 158.4 469.4 158.2 Q473.6 158.4 474 162.8" stroke="#2c2e6a" stroke-width="2.1" fill="none"/><path d="M465.6 163 Q466 160.2 469.4 160.2 Q472.6 160.2 473 163" stroke="#e0b000" stroke-width="1" fill="none"/><circle cx="468.6" cy="165.6" r="4" fill="#1a1a1a"/><circle cx="468.6" cy="165.6" r="3.12" fill="#8c8c8c"/><circle cx="468.6" cy="165.6" r="2.32" fill="#dedede"/><circle cx="468.6" cy="165.6" r="1.2" fill="#3a3a3a"/><ellipse cx="482.6" cy="157.4" rx="0.9" ry="2.2" fill="#2c2e6a"/><circle cx="499" cy="160.8" r="2.6" fill="#1a1a1a"/><circle cx="499" cy="160.8" r="2.028" fill="#8c8c8c"/><circle cx="499" cy="160.8" r="1.508" fill="#dedede"/><circle cx="499" cy="160.8" r="0.78" fill="#3a3a3a"/><circle cx="497" cy="162" r="3" fill="#1a1a1a"/><circle cx="497" cy="162" r="2.34" fill="#8c8c8c"/><circle cx="497" cy="162" r="1.74" fill="#dedede"/><circle cx="497" cy="162" r="0.9" fill="#3a3a3a"/><circle cx="494.5" cy="163.4" r="3.4" fill="#1a1a1a"/><circle cx="494.5" cy="163.4" r="2.652" fill="#8c8c8c"/><circle cx="494.5" cy="163.4" r="1.972" fill="#dedede"/><circle cx="494.5" cy="163.4" r="1.02" fill="#3a3a3a"/><circle cx="491" cy="165.6" r="4.1" fill="#1a1a1a"/><circle cx="491" cy="165.6" r="3.198" fill="#8c8c8c"/><circle cx="491" cy="165.6" r="2.378" fill="#dedede"/><circle cx="491" cy="165.6" r="1.23" fill="#3a3a3a"/><path d="M486 146.4 L506 139 M490 143 L503 138.4" stroke="#d8d8e4" stroke-width="0.6" opacity="0.8"/><polygon points="483.4,148.8 505.8,140.3 507.4,145 511,149.6 501,156.8 496,160.5 490,161.5 485,163.5 483.4,160" fill="#e6b300" /><polygon points="483.4,150 492,147 494,158 486,163.4 483.4,161" fill="#f3cf00" /><circle cx="484.2" cy="151.4" r="0.9" fill="#0a0a0a"/><circle cx="486.7" cy="150.45" r="0.9" fill="#0a0a0a"/><circle cx="489.2" cy="149.5" r="0.9" fill="#0a0a0a"/><circle cx="491.7" cy="148.55" r="0.9" fill="#0a0a0a"/><circle cx="494.2" cy="147.6" r="0.9" fill="#0a0a0a"/><circle cx="496.7" cy="146.65" r="0.9" fill="#0a0a0a"/><path d="M487.2 154.7 l0.7 5" stroke="#f8e820" stroke-width="1"/><path d="M486 155.5 l0.6 4" stroke="#2c2e6a" stroke-width="0.8" opacity="0.85"/><path d="M489.8 153.7 l0.7 5" stroke="#f8e820" stroke-width="1"/><path d="M488.6 154.5 l0.6 4" stroke="#2c2e6a" stroke-width="0.8" opacity="0.85"/><path d="M492.4 152.7 l0.7 5" stroke="#f8e820" stroke-width="1"/><path d="M491.2 153.5 l0.6 4" stroke="#2c2e6a" stroke-width="0.8" opacity="0.85"/><path d="M495 151.7 l0.7 5" stroke="#f8e820" stroke-width="1"/><path d="M493.8 152.5 l0.6 4" stroke="#2c2e6a" stroke-width="0.8" opacity="0.85"/><path d="M497.6 150.7 l0.7 5" stroke="#f8e820" stroke-width="1"/><path d="M496.4 151.5 l0.6 4" stroke="#2c2e6a" stroke-width="0.8" opacity="0.85"/><path d="M500.2 149.7 l0.7 5" stroke="#f8e820" stroke-width="1"/><path d="M499 150.5 l0.6 4" stroke="#2c2e6a" stroke-width="0.8" opacity="0.85"/><path d="M502.8 148.7 l0.7 5" stroke="#f8e820" stroke-width="1"/><path d="M501.6 149.5 l0.6 4" stroke="#2c2e6a" stroke-width="0.8" opacity="0.85"/><polygon points="500.6,159 505.3,155.2 515.5,155.2 524,150.6 529.5,156 527.5,165.2 513.8,165.2 501,163.4" fill="#f6e400" /><polygon points="505.3,155.4 509,150.4 516,146 527.5,141 530.2,143 524,148 521.5,152 520,155.4" fill="#050505" /><path d="M503.4 163.4 Q503.8 158.6 508.2 158.4 Q512.6 158.6 513 163.6" stroke="#2c2e6a" stroke-width="2.2" fill="none"/><path d="M504.6 163.8 Q505 160.6 508.2 160.6 Q511.4 160.6 511.8 163.8" stroke="#e0b000" stroke-width="1" fill="none"/><circle cx="507.2" cy="166.2" r="4.5" fill="#1a1a1a"/><circle cx="507.2" cy="166.2" r="3.51" fill="#8c8c8c"/><circle cx="507.2" cy="166.2" r="2.61" fill="#dedede"/><circle cx="507.2" cy="166.2" r="1.35" fill="#3a3a3a"/><ellipse cx="524.4" cy="157.8" rx="0.9" ry="2.4" fill="#2c2e6a"/><path d="M516 157 l1 -1.6 M518.4 156 l1 -1.6 M520.8 155 l1 -1.6" stroke="#e89a00" stroke-width="0.8"/><path d="M443 147.2 l1.6 -3.2" stroke="#c4cce6" stroke-width="0.7" opacity="0.9"/><path d="M446 146.7 l1.6 -3.2" stroke="#c4cce6" stroke-width="0.7" opacity="0.9"/><path d="M449 146.2 l1.6 -3.2" stroke="#c4cce6" stroke-width="0.7" opacity="0.9"/><path d="M452 145.7 l1.6 -3.2" stroke="#c4cce6" stroke-width="0.7" opacity="0.9"/><path d="M455 145.2 l1.6 -3.2" stroke="#c4cce6" stroke-width="0.7" opacity="0.9"/><path d="M458 144.7 l1.6 -3.2" stroke="#c4cce6" stroke-width="0.7" opacity="0.9"/><path d="M461 144.2 l1.6 -3.2" stroke="#c4cce6" stroke-width="0.7" opacity="0.9"/><path d="M464 143.7 l1.6 -3.2" stroke="#c4cce6" stroke-width="0.7" opacity="0.9"/><path d="M486.5 147.6 l1.4 -3" stroke="#c4cce6" stroke-width="0.7" opacity="0.9"/><path d="M489.3 146.6 l1.4 -3" stroke="#c4cce6" stroke-width="0.7" opacity="0.9"/><path d="M492.1 145.6 l1.4 -3" stroke="#c4cce6" stroke-width="0.7" opacity="0.9"/><path d="M494.9 144.6 l1.4 -3" stroke="#c4cce6" stroke-width="0.7" opacity="0.9"/><path d="M497.7 143.6 l1.4 -3" stroke="#c4cce6" stroke-width="0.7" opacity="0.9"/><path d="M500.5 142.6 l1.4 -3" stroke="#c4cce6" stroke-width="0.7" opacity="0.9"/><circle cx="539.4" cy="163.4" r="3" fill="#1a1a1a"/><circle cx="539.4" cy="163.4" r="2.34" fill="#8c8c8c"/><circle cx="539.4" cy="163.4" r="1.74" fill="#dedede"/><circle cx="539.4" cy="163.4" r="0.9" fill="#3a3a3a"/><circle cx="537" cy="164.6" r="3.6" fill="#1a1a1a"/><circle cx="537" cy="164.6" r="2.808" fill="#8c8c8c"/><circle cx="537" cy="164.6" r="2.088" fill="#dedede"/><circle cx="537" cy="164.6" r="1.08" fill="#3a3a3a"/><path d="M525 145 L538 136.8" stroke="#c8c8d4" stroke-width="0.7" opacity="0.8"/><polygon points="523.3,147.1 539.3,137.8 540.7,141.8 545.6,146.2 540.2,158.7 536.7,163.1 527.8,165.3 526.4,154.2" fill="#e6b300" /><path d="M528 158.6 L541.6 145.4 M530 153 L538.6 144" stroke="#8a7a5a" stroke-width="0.6"/><path d="M540.6 157.6 l2.4 -6 M539 161 l1 -2" stroke="#2c2e6a" stroke-width="0.9"/><circle cx="533.6" cy="166.7" r="4.8" fill="#1a1a1a"/><circle cx="533.6" cy="166.7" r="3.744" fill="#8c8c8c"/><circle cx="533.6" cy="166.7" r="2.784" fill="#dedede"/><circle cx="533.6" cy="166.7" r="1.44" fill="#3a3a3a"/><polygon points="572.7,151.5 575.8,148.4 580.9,153.5 586,161.7 585,163.4 578.9,164.4 573.7,165.8 570,160" fill="#e6b300" /><circle cx="580.9" cy="168.3" r="5.7" fill="#1a1a1a"/><circle cx="580.9" cy="168.3" r="4.446" fill="#8c8c8c"/><circle cx="580.9" cy="168.3" r="3.306" fill="#dedede"/><circle cx="580.9" cy="168.3" r="1.71" fill="#3a3a3a"/><polygon points="575,163.8 586,161.7 585.6,165 580.9,162.4 576,165.4" fill="#e6b300" /><polygon points="542,162.7 550.4,145.3 552,146.5 548,155.5 563,148 569.7,150.4 573.7,164.8 568.6,166.3 557.4,166.3 542,163.9" fill="#f6e400" /><polygon points="551,141.5 561,142.3 563.5,148.3 561.8,155.8 547.7,155.8 548,150" fill="#050505" /><polygon points="562,136.1 566.6,137.2 573.7,143.3 574.8,148.9 570.7,150.4 567.6,147.4 564.5,145.3 562.5,140.2" fill="#e6b300" /><path d="M564.4 140 Q569.6 148 570.2 160.6" stroke="#2c2e6a" stroke-width="1.2" fill="none"/><path d="M562.4 136.4 Q566 139 567.6 146" stroke="#2c2e6a" stroke-width="0.8" fill="none"/><path d="M544 163.4 Q544.6 158.8 550 158.6 Q555.6 158.8 556.4 164" stroke="#2c2e6a" stroke-width="2.3" fill="none"/><path d="M545.4 164 Q546 160.8 550 160.8 Q554.2 160.8 555 164.2" stroke="#e0b000" stroke-width="1" fill="none"/><polygon points="549.6,145 551.2,146 544,162.4 541.6,162" fill="#f4f000" /><circle cx="549.6" cy="167.8" r="5" fill="#1a1a1a"/><circle cx="549.6" cy="167.8" r="3.9" fill="#8c8c8c"/><circle cx="549.6" cy="167.8" r="2.9" fill="#dedede"/><circle cx="549.6" cy="167.8" r="1.5" fill="#3a3a3a"/><circle cx="576.6" cy="159.8" r="0.7" fill="#2c2e6a"/></svg>
<svg class="a" style="left:96.8px;top:244.6px;" width="7" height="7" viewBox="0 0 7 7"><rect x="0.5" y="0.6" width="4" height="3.6" fill="none" stroke="#bdbdbd" stroke-width="0.8"/><rect x="2.4" y="2.6" width="4" height="3.6" fill="#bdbdbd"/></svg>
<svg class="a" style="left:106.6px;top:244.4px;" width="8" height="7" viewBox="0 0 8 7"><rect x="0.5" y="0.5" width="6.6" height="4.6" fill="none" stroke="#bdbdbd" stroke-width="0.9"/><rect x="2.4" y="5.6" width="2.8" height="0.8" fill="#bdbdbd"/></svg>
<span class="t" style="left:118.2px;top:244.2px;font-size:6px;color:#d6d6d6;transform:scaleX(0.858);">12.5%</span>
<svg class="a" style="left:141.8px;top:246.8px;" width="4.4" height="2.6" viewBox="0 0 4.4 2.6"><path d="M0 0 H4.4 L2.2 2.6 Z" fill="#e4e4e4"/></svg>
<svg class="a" style="left:149.6px;top:244.4px;" width="8" height="7" viewBox="0 0 8 7"><rect x="0.5" y="0.8" width="5.6" height="4.8" fill="none" stroke="#cfcfcf" stroke-width="0.9"/><rect x="2" y="2.2" width="2.6" height="2" fill="#888"/><path d="M6.2 4.4 L7.4 6.2" stroke="#cfcfcf" stroke-width="0.8"/></svg>
<svg class="a" style="left:159.8px;top:244.2px;" width="8.4" height="7.4" viewBox="0 0 8.4 7.4"><path d="M0.8 6.4 V3.2 L3 1 L5 2.6 L7.4 0.8 V6.4 Z" fill="none" stroke="#2a93dc" stroke-width="1"/><rect x="0" y="5.6" width="1.6" height="1.6" fill="#2a93dc"/><rect x="6.6" y="5.6" width="1.6" height="1.6" fill="#2a93dc"/></svg>
<span class="t" style="left:172.4px;top:244.2px;font-size:6px;color:#cfcfcf;transform:scaleX(0.903);">0:00:00:17</span>
<svg class="a" style="left:203px;top:244.8px;" width="7.4" height="6" viewBox="0 0 7.4 6"><rect x="0.3" y="1.2" width="6.8" height="4.4" rx="0.6" fill="#d2d2d2"/><rect x="2.2" y="0.3" width="2.6" height="1.2" fill="#d2d2d2"/><circle cx="3.7" cy="3.5" r="1.4" fill="#333"/></svg>
<svg class="a" style="left:213.6px;top:244.4px;" width="8" height="7" viewBox="0 0 8 7"><rect x="0.6" y="3" width="4" height="2.8" rx="1.2" fill="none" stroke="#7c7c7c" stroke-width="0.9" transform="rotate(-30 2.6 4.4)"/><rect x="3.2" y="1.4" width="4" height="2.8" rx="1.2" fill="none" stroke="#7c7c7c" stroke-width="0.9" transform="rotate(-30 5.2 2.8)"/></svg>
<svg class="a" style="left:224px;top:244.4px;" width="8" height="7.4" viewBox="0 0 8 7.4"><circle cx="3.6" cy="2.4" r="2" fill="#e23a3a"/><circle cx="2.2" cy="4.8" r="2" fill="#3fc23f"/><circle cx="5" cy="4.8" r="2" fill="#3a6fe2"/><rect x="6.6" y="6.2" width="1" height="1" fill="#ccc"/></svg>
<span class="t" style="left:236px;top:244.2px;font-size:6px;color:#d6d6d6;transform:scaleX(0.895);">Quarter</span>
<svg class="a" style="left:267px;top:246.8px;" width="4.4" height="2.6" viewBox="0 0 4.4 2.6"><path d="M0 0 H4.4 L2.2 2.6 Z" fill="#e4e4e4"/></svg>
<svg class="a" style="left:275px;top:244.6px;" width="7.4" height="6.6" viewBox="0 0 7.4 6.6"><rect x="0.4" y="0.4" width="6.6" height="5.8" fill="#3a3a3a" stroke="#bdbdbd" stroke-width="0.8"/><rect x="2" y="1.8" width="3.4" height="3" fill="none" stroke="#8a8a8a" stroke-width="0.6"/></svg>
<svg class="a" style="left:285px;top:244.6px;" width="8" height="6.6" viewBox="0 0 8 6.6"><rect x="0" y="0" width="7.8" height="6.4" fill="#27b0ee"/><path d="M0 0 H2 V1.6 H0Z M4 0 H6 V1.6 H4Z M2 1.6 H4 V3.2 H2Z M6 1.6 H7.8 V3.2 H6Z M0 3.2 H2 V4.8 H0Z M4 3.2 H6 V4.8 H4Z M2 4.8 H4 V6.4 H2Z M6 4.8 H7.8 V6.4 H6Z" fill="#8fd8f8"/></svg>
<span class="t" style="left:297.2px;top:244.2px;font-size:6px;color:#d6d6d6;transform:scaleX(0.910);">Top</span>
<svg class="a" style="left:337.4px;top:246.8px;" width="4.4" height="2.6" viewBox="0 0 4.4 2.6"><path d="M0 0 H4.4 L2.2 2.6 Z" fill="#e4e4e4"/></svg>
<span class="t" style="left:347.6px;top:244.2px;font-size:6px;color:#d6d6d6;transform:scaleX(0.880);">2 Views</span>
<svg class="a" style="left:370.8px;top:246.8px;" width="4.4" height="2.6" viewBox="0 0 4.4 2.6"><path d="M0 0 H4.4 L2.2 2.6 Z" fill="#e4e4e4"/></svg>
<svg class="a" style="left:379px;top:244.6px;" width="7.4" height="6.6" viewBox="0 0 7.4 6.6"><rect x="0.6" y="2.4" width="6" height="3.6" fill="none" stroke="#d6d6d6" stroke-width="0.9"/><rect x="0.2" y="0.4" width="2" height="1.6" fill="#d6d6d6"/><rect x="5" y="0.4" width="2" height="1.6" fill="#d6d6d6"/><rect x="2.6" y="3.4" width="2" height="1.4" fill="#d6d6d6"/></svg>
<svg class="a" style="left:389px;top:244.4px;" width="8" height="7" viewBox="0 0 8 7"><rect x="0.5" y="0.6" width="7" height="5.4" fill="none" stroke="#d6d6d6" stroke-width="0.9"/><rect x="3" y="2.2" width="2" height="2.2" fill="#d6d6d6"/></svg>
<svg class="a" style="left:399.4px;top:244.4px;" width="8" height="7" viewBox="0 0 8 7"><rect x="0.3" y="2" width="7.2" height="4.2" fill="#d0d0d0"/><rect x="2.6" y="0.6" width="2.6" height="2" fill="#d0d0d0"/><rect x="1.4" y="3" width="1.4" height="2.2" fill="#333"/><rect x="3.4" y="3" width="1.4" height="2.2" fill="#333"/><rect x="5.3" y="3" width="1.2" height="2.2" fill="#333"/></svg>
<svg class="a" style="left:409px;top:244.4px;" width="8" height="7" viewBox="0 0 8 7"><rect x="2.8" y="0.4" width="2.2" height="2" fill="#d6d6d6"/><rect x="0.2" y="4.4" width="2.2" height="2" fill="#d6d6d6"/><rect x="5.4" y="4.4" width="2.2" height="2" fill="#d6d6d6"/><path d="M3.9 2.4 V3.4 M1.3 4.4 V3.4 H6.5 V4.4" stroke="#d6d6d6" stroke-width="0.7" fill="none"/></svg>
<svg class="a" style="left:420.8px;top:244.2px;" width="7.6" height="7.6" viewBox="0 0 7.6 7.6"><circle cx="3.8" cy="3.8" r="3.4" fill="#d8d8d8"/><circle cx="3.8" cy="3.8" r="1.3" fill="#2a2a2a"/><path d="M3.8 0.4 V2 M3.8 5.6 V7.2" stroke="#2a2a2a" stroke-width="0.6"/></svg>
<span class="t" style="left:431.4px;top:244.2px;font-size:6px;color:#2d86dc;transform:scaleX(0.878);">+0.0</span>
<div class="a" style="left:0px;top:253.4px;width:600px;height:1.8px;background:#0b0b0b;"></div>
<div class="a" style="left:0px;top:255px;width:600px;height:12.8px;background:#1d1d1d;"></div>
<div class="a" style="left:0px;top:267.8px;width:600px;height:1px;background:#141414;"></div>
<div class="a" style="left:0px;top:268.8px;width:215px;height:181.2px;background:#232323;"></div>
<div class="a" style="left:524.8px;top:255px;width:46.6px;height:13.8px;background:#232323;"></div>
<div class="a" style="left:27.5px;top:255px;width:0.7px;height:12.8px;background:#121212;"></div>
<div class="a" style="left:74.7px;top:255px;width:0.7px;height:12.8px;background:#121212;"></div>
<div class="a" style="left:153.6px;top:255px;width:0.7px;height:12.8px;background:#121212;"></div>
<div class="a" style="left:226.8px;top:255px;width:0.7px;height:12.8px;background:#121212;"></div>
<div class="a" style="left:276px;top:255px;width:0.7px;height:12.8px;background:#121212;"></div>
<div class="a" style="left:327px;top:255px;width:0.7px;height:12.8px;background:#121212;"></div>
<div class="a" style="left:371px;top:255px;width:0.7px;height:12.8px;background:#121212;"></div>
<div class="a" style="left:420.7px;top:255px;width:0.7px;height:12.8px;background:#121212;"></div>
<div class="a" style="left:469.6px;top:255px;width:0.7px;height:12.8px;background:#121212;"></div>
<div class="a" style="left:524.4px;top:255px;width:0.7px;height:12.8px;background:#121212;"></div>
<div class="a" style="left:571.4px;top:255px;width:0.7px;height:12.8px;background:#121212;"></div>
<span class="t" style="left:-0.6px;top:257.6px;font-size:6px;color:#7c7c7c;transform:scaleX(0.872);">row 2</span>
<svg class="a" style="left:38.2px;top:259.2px;" width="4.8" height="4.8" viewBox="0 0 4.8 4.8"><rect width="4.8" height="4.8" fill="#d9ba8c"/><path d="M2.4 0 V4.8 M0 2.4 H4.8" stroke="#f3dfbd" stroke-width="0.5"/></svg>
<span class="t" style="left:48.4px;top:257.6px;font-size:6px;color:#7c7c7c;transform:scaleX(0.851);">Earth</span>
<svg class="a" style="left:86.4px;top:259.2px;" width="4.8" height="4.8" viewBox="0 0 4.8 4.8"><rect width="4.8" height="4.8" fill="#d9ba8c"/><path d="M2.4 0 V4.8 M0 2.4 H4.8" stroke="#f3dfbd" stroke-width="0.5"/></svg>
<span class="t" style="left:97px;top:257.6px;font-size:6px;color:#7c7c7c;transform:scaleX(0.885);">Earth with locator</span>
<svg class="a" style="left:165.6px;top:259.2px;" width="4.8" height="4.8" viewBox="0 0 4.8 4.8"><rect width="4.8" height="4.8" fill="#d9ba8c"/><path d="M2.4 0 V4.8 M0 2.4 H4.8" stroke="#f3dfbd" stroke-width="0.5"/></svg>
<span class="t" style="left:174.8px;top:257.6px;font-size:6px;color:#7c7c7c;transform:scaleX(0.885);">Egypt Pyramids</span>
<svg class="a" style="left:238.8px;top:259.2px;" width="4.8" height="4.8" viewBox="0 0 4.8 4.8"><rect width="4.8" height="4.8" fill="#d9ba8c"/><path d="M2.4 0 V4.8 M0 2.4 H4.8" stroke="#f3dfbd" stroke-width="0.5"/></svg>
<span class="t" style="left:249px;top:257.6px;font-size:6px;color:#7c7c7c;transform:scaleX(0.832);">Fish 1</span>
<svg class="a" style="left:288.6px;top:259.2px;" width="4.8" height="4.8" viewBox="0 0 4.8 4.8"><rect width="4.8" height="4.8" fill="#d9ba8c"/><path d="M2.4 0 V4.8 M0 2.4 H4.8" stroke="#f3dfbd" stroke-width="0.5"/></svg>
<span class="t" style="left:299px;top:257.6px;font-size:6px;color:#7c7c7c;transform:scaleX(0.869);">Guitar</span>
<svg class="a" style="left:340px;top:259.2px;" width="4.8" height="4.8" viewBox="0 0 4.8 4.8"><rect width="4.8" height="4.8" fill="#d9ba8c"/><path d="M2.4 0 V4.8 M0 2.4 H4.8" stroke="#f3dfbd" stroke-width="0.5"/></svg>
<span class="t" style="left:350px;top:257.6px;font-size:6px;color:#7c7c7c;transform:scaleX(0.878);">Hat</span>
<svg class="a" style="left:384.6px;top:259.2px;" width="4.8" height="4.8" viewBox="0 0 4.8 4.8"><rect width="4.8" height="4.8" fill="#d9ba8c"/><path d="M2.4 0 V4.8 M0 2.4 H4.8" stroke="#f3dfbd" stroke-width="0.5"/></svg>
<span class="t" style="left:394.4px;top:257.6px;font-size:6px;color:#7c7c7c;transform:scaleX(0.971);">Hotel</span>
<svg class="a" style="left:434px;top:259.2px;" width="4.8" height="4.8" viewBox="0 0 4.8 4.8"><rect width="4.8" height="4.8" fill="#d9ba8c"/><path d="M2.4 0 V4.8 M0 2.4 H4.8" stroke="#f3dfbd" stroke-width="0.5"/></svg>
<span class="t" style="left:444px;top:257.6px;font-size:6px;color:#7c7c7c;transform:scaleX(0.815);">Lens</span>
<svg class="a" style="left:481.6px;top:259.2px;" width="4.8" height="4.8" viewBox="0 0 4.8 4.8"><rect width="4.8" height="4.8" fill="#d9ba8c"/><path d="M2.4 0 V4.8 M0 2.4 H4.8" stroke="#f3dfbd" stroke-width="0.5"/></svg>
<span class="t" style="left:491.6px;top:257.6px;font-size:6px;color:#7c7c7c;transform:scaleX(0.871);">Scooter</span>
<span class="t" style="left:529px;top:257.6px;font-size:6px;color:#a0a0a0;transform:scaleX(0.856);">×</span>
<svg class="a" style="left:536.4px;top:259.2px;" width="4.8" height="4.8" viewBox="0 0 4.8 4.8"><rect width="4.8" height="4.8" fill="#d9ba8c"/><path d="M2.4 0 V4.8 M0 2.4 H4.8" stroke="#f3dfbd" stroke-width="0.5"/></svg>
<span class="t" style="left:547.2px;top:257.6px;font-size:6px;color:#c4c4c4;transform:scaleX(0.864);">S2S</span>
<svg class="a" style="left:563px;top:259.4px;" width="3.6" height="5" viewBox="0 0 3.6 5"><path d="M0.4 0.8 H3.2 M0.4 2.4 H3.2 M0.4 4 H3.2" stroke="#8a8a8a" stroke-width="0.7"/></svg>
<svg class="a" style="left:583.8px;top:259.2px;" width="4.8" height="4.8" viewBox="0 0 4.8 4.8"><rect width="4.8" height="4.8" fill="#d9ba8c"/><path d="M2.4 0 V4.8 M0 2.4 H4.8" stroke="#f3dfbd" stroke-width="0.5"/></svg>
<span class="t" style="left:594.6px;top:257.6px;font-size:6px;color:#7c7c7c;transform:scaleX(0.864);">S2S</span>
<div class="a" style="left:0px;top:271.3px;width:112px;height:10.8px;background:#1c1c1c;"></div>
<svg class="a" style="left:125.5px;top:271.5px;" width="9" height="9" viewBox="0 0 9 9"><path d="M1 2.6 H5 M5 2.6 L7.6 2.6 M3.4 2.6 V6.4 H7.6 M5.4 4.5 H7.6" stroke="#cfcfcf" stroke-width="0.9" fill="none"/><rect x="6.6" y="1.8" width="1.8" height="1.6" fill="#cfcfcf"/><rect x="6.6" y="5.6" width="1.8" height="1.6" fill="#cfcfcf"/></svg>
<svg class="a" style="left:142.1px;top:271.5px;" width="9" height="9" viewBox="0 0 9 9"><circle cx="2" cy="1.8" r="1.4" fill="#cfcfcf"/><circle cx="5.2" cy="5" r="3" fill="none" stroke="#cfcfcf" stroke-width="1"/><circle cx="5.2" cy="5" r="1" fill="#cfcfcf"/></svg>
<svg class="a" style="left:157.5px;top:271.5px;" width="9" height="9" viewBox="0 0 9 9"><path d="M0.6 7.4 V5.4 Q0.8 1.4 4.5 1.4 Q8.2 1.4 8.4 5.4 V7.4 Z" fill="#cfcfcf"/><circle cx="4.5" cy="4.4" r="1.4" fill="#333"/><rect x="0.6" y="6" width="7.8" height="0.7" fill="#444"/></svg>
<svg class="a" style="left:169.9px;top:271.5px;" width="9" height="9" viewBox="0 0 9 9"><rect x="3.6" y="0.8" width="4" height="5.4" fill="#cfcfcf"/><rect x="1" y="2.6" width="3.6" height="5.2" fill="#8a8a8a"/><path d="M5.6 2 V5" stroke="#333" stroke-width="0.8"/></svg>
<svg class="a" style="left:181.9px;top:271.5px;" width="9" height="9" viewBox="0 0 9 9"><rect x="0.8" y="2.6" width="7.6" height="4" rx="2" fill="#cfcfcf" transform="rotate(-35 4.5 4.6)"/><circle cx="3.8" cy="5.2" r="1" fill="#444"/></svg>
<svg class="a" style="left:198.1px;top:271.5px;" width="9" height="9" viewBox="0 0 9 9"><rect x="0.8" y="2" width="7.4" height="5.6" fill="none" stroke="#cfcfcf" stroke-width="1"/><rect x="0.8" y="1.2" width="4" height="1.4" fill="#cfcfcf"/><path d="M2 3.4 L7 6.6" stroke="#999" stroke-width="0.8"/></svg>
<div class="a" style="left:0px;top:285.4px;width:215px;height:7.6px;background:#2c2c2c;"></div>
<div class="a" style="left:0px;top:284.6px;width:215px;height:0.8px;background:#191919;"></div>
<div class="a" style="left:0px;top:293px;width:215px;height:0.6px;background:#191919;"></div>
<span class="t" style="left:12.2px;top:285.4px;font-size:5.4px;color:#9a9a9a;transform:scaleX(0.711);">Mode</span>
<span class="t" style="left:47.6px;top:285.4px;font-size:5.4px;color:#9a9a9a;transform:scaleX(0.606);">T</span>
<span class="t" style="left:56.4px;top:285.4px;font-size:5.4px;color:#9a9a9a;transform:scaleX(0.759);">TrkMat</span>
<span class="t" style="left:154px;top:285.4px;font-size:5.4px;color:#8a8a8a;transform:scaleX(0.779);">Parent</span>
<div class="a" style="left:9.5px;top:286.4px;width:0.6px;height:5.6px;background:#222222;"></div>
<div class="a" style="left:45px;top:286.4px;width:0.6px;height:5.6px;background:#222222;"></div>
<div class="a" style="left:54px;top:286.4px;width:0.6px;height:5.6px;background:#222222;"></div>
<div class="a" style="left:87.6px;top:286.4px;width:0.6px;height:5.6px;background:#222222;"></div>
<div class="a" style="left:150.6px;top:286.4px;width:0.6px;height:5.6px;background:#222222;"></div>
<div class="a" style="left:206px;top:286.4px;width:0.6px;height:5.6px;background:#222222;"></div>
<svg class="a" style="left:89px;top:286.5px;" width="5.6" height="5.6" viewBox="0 0 6 6"><path d="M0.4 4 Q0.4 0.8 3 0.8 Q5.6 0.8 5.6 4 Z" fill="#dcdcdc"/><rect x="1.8" y="3.8" width="2.4" height="1.6" fill="#dcdcdc"/><circle cx="3" cy="2.6" r="0.8" fill="#222"/></svg>
<svg class="a" style="left:96.8px;top:286.8px;" width="5.4" height="5.4" viewBox="0 0 5.4 5.4"><circle cx="2.7" cy="2.7" r="1.5" fill="none" stroke="#bdbdbd" stroke-width="0.9"/><path d="M2.7 0.2 V1 M2.7 4.4 V5.2 M0.2 2.7 H1 M4.4 2.7 H5.2" stroke="#bdbdbd" stroke-width="0.7"/></svg>
<svg class="a" style="left:103.8px;top:286.2px;" width="6" height="6" viewBox="0 0 6 6"><path d="M0.4 0.6 L5.6 5.6" stroke="#d0d0d0" stroke-width="0.9"/></svg>
<span class="t" style="left:111.6px;top:285.4px;font-size:6px;color:#e0e0e0;transform:scaleX(1.071);font-style:italic;">fx</span>
<svg class="a" style="left:118.4px;top:286.4px;" width="5.4" height="6" viewBox="0 0 5.4 6"><rect x="0.4" y="0.4" width="4.6" height="5.2" fill="#d8d8d8"/><path d="M1.2 1.6 H4.2 M1.2 3 H4.2 M1.2 4.4 H4.2" stroke="#333" stroke-width="0.6"/></svg>
<svg class="a" style="left:125px;top:286.4px;" width="6" height="6" viewBox="0 0 6 6"><circle cx="3.6" cy="2.4" r="1.7" fill="none" stroke="#d8d8d8" stroke-width="0.9"/><path d="M2.4 3.6 L0.6 5.4" stroke="#d8d8d8" stroke-width="1"/></svg>
<svg class="a" style="left:131px;top:286.4px;" width="6" height="6" viewBox="0 0 6 6"><circle cx="3" cy="3" r="2.6" fill="#e6e6e6"/><path d="M3 0.4 A2.6 2.6 0 0 0 3 5.6 Z" fill="#333"/></svg>
<svg class="a" style="left:138.6px;top:286.4px;" width="6" height="6" viewBox="0 0 6 6"><circle cx="3" cy="3" r="2.5" fill="#333" stroke="#d0d0d0" stroke-width="0.7"/><path d="M3 3 V5.2 M3 3 L1.2 1.9 M3 3 L4.8 1.9" fill="none" stroke="#d0d0d0" stroke-width="0.5"/></svg>
<div class="a" style="left:0px;top:293.5px;width:215px;height:8px;background:#2b2b2b;"></div>
<div class="a" style="left:0px;top:301px;width:215px;height:0.6px;background:#1f1f1f;"></div>
<div class="a" style="left:12.6px;top:294.1px;width:30.8px;height:6.8px;background:#191919;"></div>
<span class="t" style="left:14.4px;top:293.5px;font-size:6px;color:#e6e6e6;transform:scaleX(0.921);">Normal</span>
<svg class="a" style="left:37.6px;top:296.3px;" width="4.4" height="2.6" viewBox="0 0 4.4 2.6"><path d="M0 0 H4.4 L2.2 2.6 Z" fill="#e6e6e6"/></svg>
<div class="a" style="left:46px;top:294.3px;width:6px;height:6.4px;background:#191919;"></div>
<svg class="a" style="left:89.8px;top:294.6px;" width="5.6" height="5.6" viewBox="0 0 6 6"><path d="M0.4 4 Q0.4 0.8 3 0.8 Q5.6 0.8 5.6 4 Z" fill="#dadada"/><rect x="1.8" y="3.8" width="2.4" height="1.6" fill="#dadada"/><circle cx="3" cy="2.6" r="0.8" fill="#222"/></svg>
<div class="a" style="left:97.4px;top:294.3px;width:4.8px;height:6.4px;background:#191919;"></div>
<svg class="a" style="left:104.2px;top:294.3px;" width="6.4" height="6.4" viewBox="0 0 6.4 6.4"><path d="M0.4 6 L6 0.6" stroke="#f4f4f4" stroke-width="1"/></svg>
<div class="a" style="left:125px;top:294.3px;width:5.4px;height:6.4px;background:#191919;"></div>
<div class="a" style="left:131.8px;top:294.3px;width:5.4px;height:6.4px;background:#191919;"></div>
<svg class="a" style="left:138.8px;top:294.5px;" width="6" height="6" viewBox="0 0 6 6"><circle cx="3" cy="3" r="2.5" fill="#333" stroke="#bdbdbd" stroke-width="0.7"/><path d="M3 3 V5.2 M3 3 L1.2 1.9 M3 3 L4.8 1.9" fill="none" stroke="#bdbdbd" stroke-width="0.5"/></svg>
<svg class="a" style="left:152.9px;top:294.6px;" width="5.8" height="5.8" viewBox="0 0 6.4 6.4"><circle cx="3.2" cy="3.2" r="2.6" fill="none" stroke="#a0a0a0" stroke-width="0.9"/><path d="M3.2 3.2 Q4.6 2.6 4.2 4 Q3.2 5 2.2 3.8" fill="none" stroke="#a0a0a0" stroke-width="0.7"/></svg>
<div class="a" style="left:162.8px;top:294.1px;width:42px;height:6.8px;background:#191919;"></div>
<span class="t" style="left:165.2px;top:293.5px;font-size:6px;color:#e6e6e6;transform:scaleX(0.823);">None</span>
<svg class="a" style="left:198px;top:296.3px;" width="4.4" height="2.6" viewBox="0 0 4.4 2.6"><path d="M0 0 H4.4 L2.2 2.6 Z" fill="#e6e6e6"/></svg>
<div class="a" style="left:0px;top:301.5px;width:215px;height:8px;background:#222222;"></div>
<span class="t" style="left:90.4px;top:301.5px;font-size:6px;color:#2d86d8;transform:scaleX(0.939);">0.0°,0.0°,0.0°</span>
<div class="a" style="left:0px;top:309.5px;width:215px;height:8px;background:#222222;"></div>
<span class="t" style="left:90.4px;top:309.5px;font-size:6px;color:#2d86d8;transform:scaleX(0.937);">0x-10.0°</span>
<div class="a" style="left:0px;top:317.5px;width:215px;height:8px;background:#222222;"></div>
<span class="t" style="left:90.4px;top:317.5px;font-size:6px;color:#2d86d8;transform:scaleX(0.937);">0x-16.0°</span>
<div class="a" style="left:0px;top:325.5px;width:215px;height:8px;background:#222222;"></div>
<span class="t" style="left:90.4px;top:325.5px;font-size:6px;color:#2d86d8;transform:scaleX(0.991);">0x+0.0°</span>
<div class="a" style="left:0px;top:333.5px;width:215px;height:8px;background:#2b2b2b;"></div>
<div class="a" style="left:0px;top:341px;width:215px;height:0.6px;background:#1f1f1f;"></div>
<svg class="a" style="left:89.8px;top:334.6px;" width="5.6" height="5.6" viewBox="0 0 6 6"><path d="M0.4 4 Q0.4 0.8 3 0.8 Q5.6 0.8 5.6 4 Z" fill="#dadada"/><rect x="1.8" y="3.8" width="2.4" height="1.6" fill="#dadada"/><circle cx="3" cy="2.6" r="0.8" fill="#222"/></svg>
<svg class="a" style="left:152.9px;top:334.6px;" width="5.8" height="5.8" viewBox="0 0 6.4 6.4"><circle cx="3.2" cy="3.2" r="2.6" fill="none" stroke="#a0a0a0" stroke-width="0.9"/><path d="M3.2 3.2 Q4.6 2.6 4.2 4 Q3.2 5 2.2 3.8" fill="none" stroke="#a0a0a0" stroke-width="0.7"/></svg>
<div class="a" style="left:162.8px;top:334.1px;width:42px;height:6.8px;background:#191919;"></div>
<span class="t" style="left:165.2px;top:333.5px;font-size:6px;color:#e6e6e6;transform:scaleX(0.868);">1. Null 36</span>
<svg class="a" style="left:198px;top:336.3px;" width="4.4" height="2.6" viewBox="0 0 4.4 2.6"><path d="M0 0 H4.4 L2.2 2.6 Z" fill="#e6e6e6"/></svg>
<div class="a" style="left:0px;top:341.5px;width:215px;height:8px;background:#222222;"></div>
<span class="t" style="left:90.4px;top:341.5px;font-size:6px;color:#2d86d8;transform:scaleX(0.897);">0.0,0.0,-2911.7</span>
<div class="a" style="left:0px;top:349.5px;width:215px;height:8px;background:#2b2b2b;"></div>
<div class="a" style="left:0px;top:357px;width:215px;height:0.6px;background:#1f1f1f;"></div>
<div class="a" style="left:12.6px;top:350.1px;width:30.8px;height:6.8px;background:#191919;"></div>
<span class="t" style="left:14.4px;top:349.5px;font-size:6px;color:#e6e6e6;transform:scaleX(0.921);">Normal</span>
<svg class="a" style="left:37.6px;top:352.3px;" width="4.4" height="2.6" viewBox="0 0 4.4 2.6"><path d="M0 0 H4.4 L2.2 2.6 Z" fill="#e6e6e6"/></svg>
<div class="a" style="left:46px;top:350.3px;width:6px;height:6.4px;background:#191919;"></div>
<svg class="a" style="left:89.8px;top:350.6px;" width="5.6" height="5.6" viewBox="0 0 6 6"><path d="M0.4 4 Q0.4 0.8 3 0.8 Q5.6 0.8 5.6 4 Z" fill="#dadada"/><rect x="1.8" y="3.8" width="2.4" height="1.6" fill="#dadada"/><circle cx="3" cy="2.6" r="0.8" fill="#222"/></svg>
<div class="a" style="left:97.4px;top:350.3px;width:4.8px;height:6.4px;background:#191919;"></div>
<svg class="a" style="left:104.2px;top:350.3px;" width="6.4" height="6.4" viewBox="0 0 6.4 6.4"><path d="M0.4 6 L6 0.6" stroke="#f4f4f4" stroke-width="1"/></svg>
<div class="a" style="left:125px;top:350.3px;width:5.4px;height:6.4px;background:#191919;"></div>
<div class="a" style="left:131.8px;top:350.3px;width:5.4px;height:6.4px;background:#191919;"></div>
<svg class="a" style="left:138.8px;top:350.5px;" width="6" height="6" viewBox="0 0 6 6"><circle cx="3" cy="3" r="2.5" fill="#333" stroke="#bdbdbd" stroke-width="0.7"/><path d="M3 3 V5.2 M3 3 L1.2 1.9 M3 3 L4.8 1.9" fill="none" stroke="#bdbdbd" stroke-width="0.5"/></svg>
<svg class="a" style="left:152.9px;top:350.6px;" width="5.8" height="5.8" viewBox="0 0 6.4 6.4"><circle cx="3.2" cy="3.2" r="2.6" fill="none" stroke="#a0a0a0" stroke-width="0.9"/><path d="M3.2 3.2 Q4.6 2.6 4.2 4 Q3.2 5 2.2 3.8" fill="none" stroke="#a0a0a0" stroke-width="0.7"/></svg>
<div class="a" style="left:162.8px;top:350.1px;width:42px;height:6.8px;background:#191919;"></div>
<span class="t" style="left:165.2px;top:349.5px;font-size:6px;color:#e6e6e6;transform:scaleX(0.823);">None</span>
<svg class="a" style="left:198px;top:352.3px;" width="4.4" height="2.6" viewBox="0 0 4.4 2.6"><path d="M0 0 H4.4 L2.2 2.6 Z" fill="#e6e6e6"/></svg>
<div class="a" style="left:0px;top:357.5px;width:215px;height:8px;background:#2b2b2b;"></div>
<div class="a" style="left:0px;top:365px;width:215px;height:0.6px;background:#1f1f1f;"></div>
<div class="a" style="left:12.6px;top:358.1px;width:30.8px;height:6.8px;background:#191919;"></div>
<span class="t" style="left:14.4px;top:357.5px;font-size:6px;color:#e6e6e6;transform:scaleX(0.921);">Normal</span>
<svg class="a" style="left:37.6px;top:360.3px;" width="4.4" height="2.6" viewBox="0 0 4.4 2.6"><path d="M0 0 H4.4 L2.2 2.6 Z" fill="#e6e6e6"/></svg>
<div class="a" style="left:46px;top:358.3px;width:6px;height:6.4px;background:#191919;"></div>
<div class="a" style="left:55.6px;top:358.1px;width:30px;height:6.8px;background:#191919;"></div>
<span class="t" style="left:58px;top:357.5px;font-size:6px;color:#e6e6e6;transform:scaleX(0.865);">None</span>
<svg class="a" style="left:79.2px;top:360.3px;" width="4.4" height="2.6" viewBox="0 0 4.4 2.6"><path d="M0 0 H4.4 L2.2 2.6 Z" fill="#e6e6e6"/></svg>
<svg class="a" style="left:89.8px;top:358.6px;" width="5.6" height="5.6" viewBox="0 0 6 6"><path d="M0.4 4 Q0.4 0.8 3 0.8 Q5.6 0.8 5.6 4 Z" fill="#dadada"/><rect x="1.8" y="3.8" width="2.4" height="1.6" fill="#dadada"/><circle cx="3" cy="2.6" r="0.8" fill="#222"/></svg>
<div class="a" style="left:97.4px;top:358.3px;width:4.8px;height:6.4px;background:#191919;"></div>
<svg class="a" style="left:104.2px;top:358.3px;" width="6.4" height="6.4" viewBox="0 0 6.4 6.4"><path d="M0.4 6 L6 0.6" stroke="#f4f4f4" stroke-width="1"/></svg>
<div class="a" style="left:125px;top:358.3px;width:5.4px;height:6.4px;background:#191919;"></div>
<div class="a" style="left:131.8px;top:358.3px;width:5.4px;height:6.4px;background:#191919;"></div>
<svg class="a" style="left:138.8px;top:358.5px;" width="6" height="6" viewBox="0 0 6 6"><circle cx="3" cy="3" r="2.5" fill="#333" stroke="#bdbdbd" stroke-width="0.7"/><path d="M3 3 V5.2 M3 3 L1.2 1.9 M3 3 L4.8 1.9" fill="none" stroke="#bdbdbd" stroke-width="0.5"/></svg>
<svg class="a" style="left:152.9px;top:358.6px;" width="5.8" height="5.8" viewBox="0 0 6.4 6.4"><circle cx="3.2" cy="3.2" r="2.6" fill="none" stroke="#a0a0a0" stroke-width="0.9"/><path d="M3.2 3.2 Q4.6 2.6 4.2 4 Q3.2 5 2.2 3.8" fill="none" stroke="#a0a0a0" stroke-width="0.7"/></svg>
<div class="a" style="left:162.8px;top:358.1px;width:42px;height:6.8px;background:#191919;"></div>
<span class="t" style="left:165.2px;top:357.5px;font-size:6px;color:#e6e6e6;transform:scaleX(0.823);">None</span>
<svg class="a" style="left:198px;top:360.3px;" width="4.4" height="2.6" viewBox="0 0 4.4 2.6"><path d="M0 0 H4.4 L2.2 2.6 Z" fill="#e6e6e6"/></svg>
<div class="a" style="left:0px;top:365.5px;width:215px;height:8px;background:#2b2b2b;"></div>
<div class="a" style="left:0px;top:373px;width:215px;height:0.6px;background:#1f1f1f;"></div>
<div class="a" style="left:12.6px;top:366.1px;width:30.8px;height:6.8px;background:#191919;"></div>
<span class="t" style="left:14.4px;top:365.5px;font-size:6px;color:#e6e6e6;transform:scaleX(0.921);">Normal</span>
<svg class="a" style="left:37.6px;top:368.3px;" width="4.4" height="2.6" viewBox="0 0 4.4 2.6"><path d="M0 0 H4.4 L2.2 2.6 Z" fill="#e6e6e6"/></svg>
<div class="a" style="left:46px;top:366.3px;width:6px;height:6.4px;background:#191919;"></div>
<div class="a" style="left:55.6px;top:366.1px;width:30px;height:6.8px;background:#191919;"></div>
<span class="t" style="left:58px;top:365.5px;font-size:6px;color:#e6e6e6;transform:scaleX(0.865);">None</span>
<svg class="a" style="left:79.2px;top:368.3px;" width="4.4" height="2.6" viewBox="0 0 4.4 2.6"><path d="M0 0 H4.4 L2.2 2.6 Z" fill="#e6e6e6"/></svg>
<svg class="a" style="left:89.8px;top:366.6px;" width="5.6" height="5.6" viewBox="0 0 6 6"><path d="M0.4 4 Q0.4 0.8 3 0.8 Q5.6 0.8 5.6 4 Z" fill="#dadada"/><rect x="1.8" y="3.8" width="2.4" height="1.6" fill="#dadada"/><circle cx="3" cy="2.6" r="0.8" fill="#222"/></svg>
<div class="a" style="left:97.4px;top:366.3px;width:4.8px;height:6.4px;background:#191919;"></div>
<svg class="a" style="left:104.2px;top:366.3px;" width="6.4" height="6.4" viewBox="0 0 6.4 6.4"><path d="M0.4 6 L6 0.6" stroke="#f4f4f4" stroke-width="1"/></svg>
<div class="a" style="left:125px;top:366.3px;width:5.4px;height:6.4px;background:#191919;"></div>
<div class="a" style="left:131.8px;top:366.3px;width:5.4px;height:6.4px;background:#191919;"></div>
<svg class="a" style="left:138.8px;top:366.5px;" width="6" height="6" viewBox="0 0 6 6"><circle cx="3" cy="3" r="2.5" fill="#333" stroke="#bdbdbd" stroke-width="0.7"/><path d="M3 3 V5.2 M3 3 L1.2 1.9 M3 3 L4.8 1.9" fill="none" stroke="#bdbdbd" stroke-width="0.5"/></svg>
<svg class="a" style="left:152.9px;top:366.6px;" width="5.8" height="5.8" viewBox="0 0 6.4 6.4"><circle cx="3.2" cy="3.2" r="2.6" fill="none" stroke="#a0a0a0" stroke-width="0.9"/><path d="M3.2 3.2 Q4.6 2.6 4.2 4 Q3.2 5 2.2 3.8" fill="none" stroke="#a0a0a0" stroke-width="0.7"/></svg>
<div class="a" style="left:162.8px;top:366.1px;width:42px;height:6.8px;background:#191919;"></div>
<span class="t" style="left:165.2px;top:365.5px;font-size:6px;color:#e6e6e6;transform:scaleX(0.823);">None</span>
<svg class="a" style="left:198px;top:368.3px;" width="4.4" height="2.6" viewBox="0 0 4.4 2.6"><path d="M0 0 H4.4 L2.2 2.6 Z" fill="#e6e6e6"/></svg>
<div class="a" style="left:0px;top:373.5px;width:215px;height:8px;background:#2b2b2b;"></div>
<div class="a" style="left:0px;top:381px;width:215px;height:0.6px;background:#1f1f1f;"></div>
<div class="a" style="left:12.6px;top:374.1px;width:30.8px;height:6.8px;background:#191919;"></div>
<span class="t" style="left:14.4px;top:373.5px;font-size:6px;color:#e6e6e6;transform:scaleX(0.921);">Normal</span>
<svg class="a" style="left:37.6px;top:376.3px;" width="4.4" height="2.6" viewBox="0 0 4.4 2.6"><path d="M0 0 H4.4 L2.2 2.6 Z" fill="#e6e6e6"/></svg>
<div class="a" style="left:46px;top:374.3px;width:6px;height:6.4px;background:#191919;"></div>
<div class="a" style="left:55.6px;top:374.1px;width:30px;height:6.8px;background:#191919;"></div>
<span class="t" style="left:58px;top:373.5px;font-size:6px;color:#e6e6e6;transform:scaleX(0.865);">None</span>
<svg class="a" style="left:79.2px;top:376.3px;" width="4.4" height="2.6" viewBox="0 0 4.4 2.6"><path d="M0 0 H4.4 L2.2 2.6 Z" fill="#e6e6e6"/></svg>
<svg class="a" style="left:89.8px;top:374.6px;" width="5.6" height="5.6" viewBox="0 0 6 6"><path d="M0.4 4 Q0.4 0.8 3 0.8 Q5.6 0.8 5.6 4 Z" fill="#dadada"/><rect x="1.8" y="3.8" width="2.4" height="1.6" fill="#dadada"/><circle cx="3" cy="2.6" r="0.8" fill="#222"/></svg>
<div class="a" style="left:97.4px;top:374.3px;width:4.8px;height:6.4px;background:#191919;"></div>
<svg class="a" style="left:104.2px;top:374.3px;" width="6.4" height="6.4" viewBox="0 0 6.4 6.4"><path d="M0.4 6 L6 0.6" stroke="#f4f4f4" stroke-width="1"/></svg>
<div class="a" style="left:125px;top:374.3px;width:5.4px;height:6.4px;background:#191919;"></div>
<div class="a" style="left:131.8px;top:374.3px;width:5.4px;height:6.4px;background:#191919;"></div>
<svg class="a" style="left:138.8px;top:374.5px;" width="6" height="6" viewBox="0 0 6 6"><circle cx="3" cy="3" r="2.5" fill="#333" stroke="#bdbdbd" stroke-width="0.7"/><path d="M3 3 V5.2 M3 3 L1.2 1.9 M3 3 L4.8 1.9" fill="none" stroke="#bdbdbd" stroke-width="0.5"/></svg>
<svg class="a" style="left:152.9px;top:374.6px;" width="5.8" height="5.8" viewBox="0 0 6.4 6.4"><circle cx="3.2" cy="3.2" r="2.6" fill="none" stroke="#a0a0a0" stroke-width="0.9"/><path d="M3.2 3.2 Q4.6 2.6 4.2 4 Q3.2 5 2.2 3.8" fill="none" stroke="#a0a0a0" stroke-width="0.7"/></svg>
<div class="a" style="left:162.8px;top:374.1px;width:42px;height:6.8px;background:#191919;"></div>
<span class="t" style="left:165.2px;top:373.5px;font-size:6px;color:#e6e6e6;transform:scaleX(0.823);">None</span>
<svg class="a" style="left:198px;top:376.3px;" width="4.4" height="2.6" viewBox="0 0 4.4 2.6"><path d="M0 0 H4.4 L2.2 2.6 Z" fill="#e6e6e6"/></svg>
<div class="a" style="left:0px;top:381.5px;width:215px;height:8px;background:#2b2b2b;"></div>
<div class="a" style="left:0px;top:389px;width:215px;height:0.6px;background:#1f1f1f;"></div>
<div class="a" style="left:12.6px;top:382.1px;width:30.8px;height:6.8px;background:#191919;"></div>
<span class="t" style="left:14.4px;top:381.5px;font-size:6px;color:#e6e6e6;transform:scaleX(0.921);">Normal</span>
<svg class="a" style="left:37.6px;top:384.3px;" width="4.4" height="2.6" viewBox="0 0 4.4 2.6"><path d="M0 0 H4.4 L2.2 2.6 Z" fill="#e6e6e6"/></svg>
<div class="a" style="left:46px;top:382.3px;width:6px;height:6.4px;background:#191919;"></div>
<div class="a" style="left:55.6px;top:382.1px;width:30px;height:6.8px;background:#191919;"></div>
<span class="t" style="left:58px;top:381.5px;font-size:6px;color:#e6e6e6;transform:scaleX(0.865);">None</span>
<svg class="a" style="left:79.2px;top:384.3px;" width="4.4" height="2.6" viewBox="0 0 4.4 2.6"><path d="M0 0 H4.4 L2.2 2.6 Z" fill="#e6e6e6"/></svg>
<svg class="a" style="left:89.8px;top:382.6px;" width="5.6" height="5.6" viewBox="0 0 6 6"><path d="M0.4 4 Q0.4 0.8 3 0.8 Q5.6 0.8 5.6 4 Z" fill="#dadada"/><rect x="1.8" y="3.8" width="2.4" height="1.6" fill="#dadada"/><circle cx="3" cy="2.6" r="0.8" fill="#222"/></svg>
<div class="a" style="left:97.4px;top:382.3px;width:4.8px;height:6.4px;background:#191919;"></div>
<svg class="a" style="left:104.2px;top:382.3px;" width="6.4" height="6.4" viewBox="0 0 6.4 6.4"><path d="M0.4 6 L6 0.6" stroke="#f4f4f4" stroke-width="1"/></svg>
<div class="a" style="left:125px;top:382.3px;width:5.4px;height:6.4px;background:#191919;"></div>
<div class="a" style="left:131.8px;top:382.3px;width:5.4px;height:6.4px;background:#191919;"></div>
<svg class="a" style="left:138.8px;top:382.5px;" width="6" height="6" viewBox="0 0 6 6"><circle cx="3" cy="3" r="2.5" fill="#333" stroke="#bdbdbd" stroke-width="0.7"/><path d="M3 3 V5.2 M3 3 L1.2 1.9 M3 3 L4.8 1.9" fill="none" stroke="#bdbdbd" stroke-width="0.5"/></svg>
<svg class="a" style="left:152.9px;top:382.6px;" width="5.8" height="5.8" viewBox="0 0 6.4 6.4"><circle cx="3.2" cy="3.2" r="2.6" fill="none" stroke="#a0a0a0" stroke-width="0.9"/><path d="M3.2 3.2 Q4.6 2.6 4.2 4 Q3.2 5 2.2 3.8" fill="none" stroke="#a0a0a0" stroke-width="0.7"/></svg>
<div class="a" style="left:162.8px;top:382.1px;width:42px;height:6.8px;background:#191919;"></div>
<span class="t" style="left:165.2px;top:381.5px;font-size:6px;color:#e6e6e6;transform:scaleX(0.823);">None</span>
<svg class="a" style="left:198px;top:384.3px;" width="4.4" height="2.6" viewBox="0 0 4.4 2.6"><path d="M0 0 H4.4 L2.2 2.6 Z" fill="#e6e6e6"/></svg>
<div class="a" style="left:0px;top:389.5px;width:215px;height:8px;background:#2b2b2b;"></div>
<div class="a" style="left:0px;top:397px;width:215px;height:0.6px;background:#1f1f1f;"></div>
<div class="a" style="left:12.6px;top:390.1px;width:30.8px;height:6.8px;background:#191919;"></div>
<span class="t" style="left:14.4px;top:389.5px;font-size:6px;color:#e6e6e6;transform:scaleX(0.921);">Normal</span>
<svg class="a" style="left:37.6px;top:392.3px;" width="4.4" height="2.6" viewBox="0 0 4.4 2.6"><path d="M0 0 H4.4 L2.2 2.6 Z" fill="#e6e6e6"/></svg>
<div class="a" style="left:46px;top:390.3px;width:6px;height:6.4px;background:#191919;"></div>
<div class="a" style="left:55.6px;top:390.1px;width:30px;height:6.8px;background:#191919;"></div>
<span class="t" style="left:58px;top:389.5px;font-size:6px;color:#e6e6e6;transform:scaleX(0.865);">None</span>
<svg class="a" style="left:79.2px;top:392.3px;" width="4.4" height="2.6" viewBox="0 0 4.4 2.6"><path d="M0 0 H4.4 L2.2 2.6 Z" fill="#e6e6e6"/></svg>
<svg class="a" style="left:89.8px;top:390.6px;" width="5.6" height="5.6" viewBox="0 0 6 6"><path d="M0.4 4 Q0.4 0.8 3 0.8 Q5.6 0.8 5.6 4 Z" fill="#dadada"/><rect x="1.8" y="3.8" width="2.4" height="1.6" fill="#dadada"/><circle cx="3" cy="2.6" r="0.8" fill="#222"/></svg>
<div class="a" style="left:97.4px;top:390.3px;width:4.8px;height:6.4px;background:#191919;"></div>
<svg class="a" style="left:104.2px;top:390.3px;" width="6.4" height="6.4" viewBox="0 0 6.4 6.4"><path d="M0.4 6 L6 0.6" stroke="#f4f4f4" stroke-width="1"/></svg>
<div class="a" style="left:125px;top:390.3px;width:5.4px;height:6.4px;background:#191919;"></div>
<div class="a" style="left:131.8px;top:390.3px;width:5.4px;height:6.4px;background:#191919;"></div>
<svg class="a" style="left:138.8px;top:390.5px;" width="6" height="6" viewBox="0 0 6 6"><circle cx="3" cy="3" r="2.5" fill="#333" stroke="#bdbdbd" stroke-width="0.7"/><path d="M3 3 V5.2 M3 3 L1.2 1.9 M3 3 L4.8 1.9" fill="none" stroke="#bdbdbd" stroke-width="0.5"/></svg>
<svg class="a" style="left:152.9px;top:390.6px;" width="5.8" height="5.8" viewBox="0 0 6.4 6.4"><circle cx="3.2" cy="3.2" r="2.6" fill="none" stroke="#a0a0a0" stroke-width="0.9"/><path d="M3.2 3.2 Q4.6 2.6 4.2 4 Q3.2 5 2.2 3.8" fill="none" stroke="#a0a0a0" stroke-width="0.7"/></svg>
<div class="a" style="left:162.8px;top:390.1px;width:42px;height:6.8px;background:#191919;"></div>
<span class="t" style="left:165.2px;top:389.5px;font-size:6px;color:#e6e6e6;transform:scaleX(0.823);">None</span>
<svg class="a" style="left:198px;top:392.3px;" width="4.4" height="2.6" viewBox="0 0 4.4 2.6"><path d="M0 0 H4.4 L2.2 2.6 Z" fill="#e6e6e6"/></svg>
<div class="a" style="left:0px;top:397.5px;width:215px;height:8px;background:#2b2b2b;"></div>
<div class="a" style="left:0px;top:405px;width:215px;height:0.6px;background:#1f1f1f;"></div>
<div class="a" style="left:12.6px;top:398.1px;width:30.8px;height:6.8px;background:#191919;"></div>
<span class="t" style="left:14.4px;top:397.5px;font-size:6px;color:#e6e6e6;transform:scaleX(0.921);">Normal</span>
<svg class="a" style="left:37.6px;top:400.3px;" width="4.4" height="2.6" viewBox="0 0 4.4 2.6"><path d="M0 0 H4.4 L2.2 2.6 Z" fill="#e6e6e6"/></svg>
<div class="a" style="left:46px;top:398.3px;width:6px;height:6.4px;background:#191919;"></div>
<div class="a" style="left:55.6px;top:398.1px;width:30px;height:6.8px;background:#191919;"></div>
<span class="t" style="left:58px;top:397.5px;font-size:6px;color:#e6e6e6;transform:scaleX(0.865);">None</span>
<svg class="a" style="left:79.2px;top:400.3px;" width="4.4" height="2.6" viewBox="0 0 4.4 2.6"><path d="M0 0 H4.4 L2.2 2.6 Z" fill="#e6e6e6"/></svg>
<svg class="a" style="left:89.8px;top:398.6px;" width="5.6" height="5.6" viewBox="0 0 6 6"><path d="M0.4 4 Q0.4 0.8 3 0.8 Q5.6 0.8 5.6 4 Z" fill="#dadada"/><rect x="1.8" y="3.8" width="2.4" height="1.6" fill="#dadada"/><circle cx="3" cy="2.6" r="0.8" fill="#222"/></svg>
<div class="a" style="left:97.4px;top:398.3px;width:4.8px;height:6.4px;background:#191919;"></div>
<svg class="a" style="left:104.2px;top:398.3px;" width="6.4" height="6.4" viewBox="0 0 6.4 6.4"><path d="M0.4 6 L6 0.6" stroke="#f4f4f4" stroke-width="1"/></svg>
<div class="a" style="left:125px;top:398.3px;width:5.4px;height:6.4px;background:#191919;"></div>
<div class="a" style="left:131.8px;top:398.3px;width:5.4px;height:6.4px;background:#191919;"></div>
<svg class="a" style="left:138.8px;top:398.5px;" width="6" height="6" viewBox="0 0 6 6"><circle cx="3" cy="3" r="2.5" fill="#333" stroke="#bdbdbd" stroke-width="0.7"/><path d="M3 3 V5.2 M3 3 L1.2 1.9 M3 3 L4.8 1.9" fill="none" stroke="#bdbdbd" stroke-width="0.5"/></svg>
<svg class="a" style="left:152.9px;top:398.6px;" width="5.8" height="5.8" viewBox="0 0 6.4 6.4"><circle cx="3.2" cy="3.2" r="2.6" fill="none" stroke="#a0a0a0" stroke-width="0.9"/><path d="M3.2 3.2 Q4.6 2.6 4.2 4 Q3.2 5 2.2 3.8" fill="none" stroke="#a0a0a0" stroke-width="0.7"/></svg>
<div class="a" style="left:162.8px;top:398.1px;width:42px;height:6.8px;background:#191919;"></div>
<span class="t" style="left:165.2px;top:397.5px;font-size:6px;color:#e6e6e6;transform:scaleX(0.823);">None</span>
<svg class="a" style="left:198px;top:400.3px;" width="4.4" height="2.6" viewBox="0 0 4.4 2.6"><path d="M0 0 H4.4 L2.2 2.6 Z" fill="#e6e6e6"/></svg>
<div class="a" style="left:0px;top:405.5px;width:215px;height:8px;background:#2b2b2b;"></div>
<div class="a" style="left:0px;top:413px;width:215px;height:0.6px;background:#1f1f1f;"></div>
<div class="a" style="left:12.6px;top:406.1px;width:30.8px;height:6.8px;background:#191919;"></div>
<span class="t" style="left:14.4px;top:405.5px;font-size:6px;color:#e6e6e6;transform:scaleX(0.921);">Normal</span>
<svg class="a" style="left:37.6px;top:408.3px;" width="4.4" height="2.6" viewBox="0 0 4.4 2.6"><path d="M0 0 H4.4 L2.2 2.6 Z" fill="#e6e6e6"/></svg>
<div class="a" style="left:46px;top:406.3px;width:6px;height:6.4px;background:#191919;"></div>
<div class="a" style="left:55.6px;top:406.1px;width:30px;height:6.8px;background:#191919;"></div>
<span class="t" style="left:58px;top:405.5px;font-size:6px;color:#e6e6e6;transform:scaleX(0.865);">None</span>
<svg class="a" style="left:79.2px;top:408.3px;" width="4.4" height="2.6" viewBox="0 0 4.4 2.6"><path d="M0 0 H4.4 L2.2 2.6 Z" fill="#e6e6e6"/></svg>
<svg class="a" style="left:89.8px;top:406.6px;" width="5.6" height="5.6" viewBox="0 0 6 6"><path d="M0.4 4 Q0.4 0.8 3 0.8 Q5.6 0.8 5.6 4 Z" fill="#dadada"/><rect x="1.8" y="3.8" width="2.4" height="1.6" fill="#dadada"/><circle cx="3" cy="2.6" r="0.8" fill="#222"/></svg>
<div class="a" style="left:97.4px;top:406.3px;width:4.8px;height:6.4px;background:#191919;"></div>
<svg class="a" style="left:104.2px;top:406.3px;" width="6.4" height="6.4" viewBox="0 0 6.4 6.4"><path d="M0.4 6 L6 0.6" stroke="#f4f4f4" stroke-width="1"/></svg>
<div class="a" style="left:125px;top:406.3px;width:5.4px;height:6.4px;background:#191919;"></div>
<div class="a" style="left:131.8px;top:406.3px;width:5.4px;height:6.4px;background:#191919;"></div>
<svg class="a" style="left:138.8px;top:406.5px;" width="6" height="6" viewBox="0 0 6 6"><circle cx="3" cy="3" r="2.5" fill="#333" stroke="#bdbdbd" stroke-width="0.7"/><path d="M3 3 V5.2 M3 3 L1.2 1.9 M3 3 L4.8 1.9" fill="none" stroke="#bdbdbd" stroke-width="0.5"/></svg>
<svg class="a" style="left:152.9px;top:406.6px;" width="5.8" height="5.8" viewBox="0 0 6.4 6.4"><circle cx="3.2" cy="3.2" r="2.6" fill="none" stroke="#a0a0a0" stroke-width="0.9"/><path d="M3.2 3.2 Q4.6 2.6 4.2 4 Q3.2 5 2.2 3.8" fill="none" stroke="#a0a0a0" stroke-width="0.7"/></svg>
<div class="a" style="left:162.8px;top:406.1px;width:42px;height:6.8px;background:#191919;"></div>
<span class="t" style="left:165.2px;top:405.5px;font-size:6px;color:#e6e6e6;transform:scaleX(0.823);">None</span>
<svg class="a" style="left:198px;top:408.3px;" width="4.4" height="2.6" viewBox="0 0 4.4 2.6"><path d="M0 0 H4.4 L2.2 2.6 Z" fill="#e6e6e6"/></svg>
<div class="a" style="left:0px;top:413.5px;width:215px;height:8px;background:#2b2b2b;"></div>
<div class="a" style="left:0px;top:421px;width:215px;height:0.6px;background:#1f1f1f;"></div>
<div class="a" style="left:12.6px;top:414.1px;width:30.8px;height:6.8px;background:#191919;"></div>
<span class="t" style="left:14.4px;top:413.5px;font-size:6px;color:#e6e6e6;transform:scaleX(0.921);">Normal</span>
<svg class="a" style="left:37.6px;top:416.3px;" width="4.4" height="2.6" viewBox="0 0 4.4 2.6"><path d="M0 0 H4.4 L2.2 2.6 Z" fill="#e6e6e6"/></svg>
<div class="a" style="left:46px;top:414.3px;width:6px;height:6.4px;background:#191919;"></div>
<div class="a" style="left:55.6px;top:414.1px;width:30px;height:6.8px;background:#191919;"></div>
<span class="t" style="left:58px;top:413.5px;font-size:6px;color:#e6e6e6;transform:scaleX(0.865);">None</span>
<svg class="a" style="left:79.2px;top:416.3px;" width="4.4" height="2.6" viewBox="0 0 4.4 2.6"><path d="M0 0 H4.4 L2.2 2.6 Z" fill="#e6e6e6"/></svg>
<svg class="a" style="left:89.8px;top:414.6px;" width="5.6" height="5.6" viewBox="0 0 6 6"><path d="M0.4 4 Q0.4 0.8 3 0.8 Q5.6 0.8 5.6 4 Z" fill="#dadada"/><rect x="1.8" y="3.8" width="2.4" height="1.6" fill="#dadada"/><circle cx="3" cy="2.6" r="0.8" fill="#222"/></svg>
<div class="a" style="left:97.4px;top:414.3px;width:4.8px;height:6.4px;background:#191919;"></div>
<svg class="a" style="left:104.2px;top:414.3px;" width="6.4" height="6.4" viewBox="0 0 6.4 6.4"><path d="M0.4 6 L6 0.6" stroke="#f4f4f4" stroke-width="1"/></svg>
<div class="a" style="left:125px;top:414.3px;width:5.4px;height:6.4px;background:#191919;"></div>
<div class="a" style="left:131.8px;top:414.3px;width:5.4px;height:6.4px;background:#191919;"></div>
<svg class="a" style="left:138.8px;top:414.5px;" width="6" height="6" viewBox="0 0 6 6"><circle cx="3" cy="3" r="2.5" fill="#333" stroke="#bdbdbd" stroke-width="0.7"/><path d="M3 3 V5.2 M3 3 L1.2 1.9 M3 3 L4.8 1.9" fill="none" stroke="#bdbdbd" stroke-width="0.5"/></svg>
<svg class="a" style="left:152.9px;top:414.6px;" width="5.8" height="5.8" viewBox="0 0 6.4 6.4"><circle cx="3.2" cy="3.2" r="2.6" fill="none" stroke="#a0a0a0" stroke-width="0.9"/><path d="M3.2 3.2 Q4.6 2.6 4.2 4 Q3.2 5 2.2 3.8" fill="none" stroke="#a0a0a0" stroke-width="0.7"/></svg>
<div class="a" style="left:162.8px;top:414.1px;width:42px;height:6.8px;background:#191919;"></div>
<span class="t" style="left:165.2px;top:413.5px;font-size:6px;color:#e6e6e6;transform:scaleX(0.823);">None</span>
<svg class="a" style="left:198px;top:416.3px;" width="4.4" height="2.6" viewBox="0 0 4.4 2.6"><path d="M0 0 H4.4 L2.2 2.6 Z" fill="#e6e6e6"/></svg>
<div class="a" style="left:0px;top:421.5px;width:215px;height:8px;background:#2b2b2b;"></div>
<div class="a" style="left:0px;top:429px;width:215px;height:0.6px;background:#1f1f1f;"></div>
<div class="a" style="left:12.6px;top:422.1px;width:30.8px;height:6.8px;background:#191919;"></div>
<span class="t" style="left:14.4px;top:421.5px;font-size:6px;color:#e6e6e6;transform:scaleX(0.921);">Normal</span>
<svg class="a" style="left:37.6px;top:424.3px;" width="4.4" height="2.6" viewBox="0 0 4.4 2.6"><path d="M0 0 H4.4 L2.2 2.6 Z" fill="#e6e6e6"/></svg>
<div class="a" style="left:46px;top:422.3px;width:6px;height:6.4px;background:#191919;"></div>
<div class="a" style="left:55.6px;top:422.1px;width:30px;height:6.8px;background:#191919;"></div>
<span class="t" style="left:58px;top:421.5px;font-size:6px;color:#e6e6e6;transform:scaleX(0.865);">None</span>
<svg class="a" style="left:79.2px;top:424.3px;" width="4.4" height="2.6" viewBox="0 0 4.4 2.6"><path d="M0 0 H4.4 L2.2 2.6 Z" fill="#e6e6e6"/></svg>
<svg class="a" style="left:89.8px;top:422.6px;" width="5.6" height="5.6" viewBox="0 0 6 6"><path d="M0.4 4 Q0.4 0.8 3 0.8 Q5.6 0.8 5.6 4 Z" fill="#dadada"/><rect x="1.8" y="3.8" width="2.4" height="1.6" fill="#dadada"/><circle cx="3" cy="2.6" r="0.8" fill="#222"/></svg>
<div class="a" style="left:97.4px;top:422.3px;width:4.8px;height:6.4px;background:#191919;"></div>
<svg class="a" style="left:104.2px;top:422.3px;" width="6.4" height="6.4" viewBox="0 0 6.4 6.4"><path d="M0.4 6 L6 0.6" stroke="#f4f4f4" stroke-width="1"/></svg>
<div class="a" style="left:125px;top:422.3px;width:5.4px;height:6.4px;background:#191919;"></div>
<div class="a" style="left:131.8px;top:422.3px;width:5.4px;height:6.4px;background:#191919;"></div>
<svg class="a" style="left:138.8px;top:422.5px;" width="6" height="6" viewBox="0 0 6 6"><circle cx="3" cy="3" r="2.5" fill="#333" stroke="#bdbdbd" stroke-width="0.7"/><path d="M3 3 V5.2 M3 3 L1.2 1.9 M3 3 L4.8 1.9" fill="none" stroke="#bdbdbd" stroke-width="0.5"/></svg>
<svg class="a" style="left:152.9px;top:422.6px;" width="5.8" height="5.8" viewBox="0 0 6.4 6.4"><circle cx="3.2" cy="3.2" r="2.6" fill="none" stroke="#a0a0a0" stroke-width="0.9"/><path d="M3.2 3.2 Q4.6 2.6 4.2 4 Q3.2 5 2.2 3.8" fill="none" stroke="#a0a0a0" stroke-width="0.7"/></svg>
<div class="a" style="left:162.8px;top:422.1px;width:42px;height:6.8px;background:#191919;"></div>
<span class="t" style="left:165.2px;top:421.5px;font-size:6px;color:#e6e6e6;transform:scaleX(0.823);">None</span>
<svg class="a" style="left:198px;top:424.3px;" width="4.4" height="2.6" viewBox="0 0 4.4 2.6"><path d="M0 0 H4.4 L2.2 2.6 Z" fill="#e6e6e6"/></svg>
<div class="a" style="left:0px;top:429.5px;width:215px;height:8px;background:#2b2b2b;"></div>
<div class="a" style="left:0px;top:437px;width:215px;height:0.6px;background:#1f1f1f;"></div>
<div class="a" style="left:12.6px;top:430.1px;width:30.8px;height:6.8px;background:#191919;"></div>
<span class="t" style="left:14.4px;top:429.5px;font-size:6px;color:#e6e6e6;transform:scaleX(0.921);">Normal</span>
<svg class="a" style="left:37.6px;top:432.3px;" width="4.4" height="2.6" viewBox="0 0 4.4 2.6"><path d="M0 0 H4.4 L2.2 2.6 Z" fill="#e6e6e6"/></svg>
<div class="a" style="left:46px;top:430.3px;width:6px;height:6.4px;background:#191919;"></div>
<div class="a" style="left:55.6px;top:430.1px;width:30px;height:6.8px;background:#191919;"></div>
<span class="t" style="left:58px;top:429.5px;font-size:6px;color:#e6e6e6;transform:scaleX(0.865);">None</span>
<svg class="a" style="left:79.2px;top:432.3px;" width="4.4" height="2.6" viewBox="0 0 4.4 2.6"><path d="M0 0 H4.4 L2.2 2.6 Z" fill="#e6e6e6"/></svg>
<svg class="a" style="left:89.8px;top:430.6px;" width="5.6" height="5.6" viewBox="0 0 6 6"><path d="M0.4 4 Q0.4 0.8 3 0.8 Q5.6 0.8 5.6 4 Z" fill="#dadada"/><rect x="1.8" y="3.8" width="2.4" height="1.6" fill="#dadada"/><circle cx="3" cy="2.6" r="0.8" fill="#222"/></svg>
<div class="a" style="left:97.4px;top:430.3px;width:4.8px;height:6.4px;background:#191919;"></div>
<svg class="a" style="left:104.2px;top:430.3px;" width="6.4" height="6.4" viewBox="0 0 6.4 6.4"><path d="M0.4 6 L6 0.6" stroke="#f4f4f4" stroke-width="1"/></svg>
<div class="a" style="left:125px;top:430.3px;width:5.4px;height:6.4px;background:#191919;"></div>
<div class="a" style="left:131.8px;top:430.3px;width:5.4px;height:6.4px;background:#191919;"></div>
<svg class="a" style="left:138.8px;top:430.5px;" width="6" height="6" viewBox="0 0 6 6"><circle cx="3" cy="3" r="2.5" fill="#333" stroke="#bdbdbd" stroke-width="0.7"/><path d="M3 3 V5.2 M3 3 L1.2 1.9 M3 3 L4.8 1.9" fill="none" stroke="#bdbdbd" stroke-width="0.5"/></svg>
<svg class="a" style="left:152.9px;top:430.6px;" width="5.8" height="5.8" viewBox="0 0 6.4 6.4"><circle cx="3.2" cy="3.2" r="2.6" fill="none" stroke="#a0a0a0" stroke-width="0.9"/><path d="M3.2 3.2 Q4.6 2.6 4.2 4 Q3.2 5 2.2 3.8" fill="none" stroke="#a0a0a0" stroke-width="0.7"/></svg>
<div class="a" style="left:162.8px;top:430.1px;width:42px;height:6.8px;background:#191919;"></div>
<span class="t" style="left:165.2px;top:429.5px;font-size:6px;color:#e6e6e6;transform:scaleX(0.823);">None</span>
<svg class="a" style="left:198px;top:432.3px;" width="4.4" height="2.6" viewBox="0 0 4.4 2.6"><path d="M0 0 H4.4 L2.2 2.6 Z" fill="#e6e6e6"/></svg>
<div class="a" style="left:0px;top:437.5px;width:215px;height:8px;background:#2b2b2b;"></div>
<div class="a" style="left:0px;top:445px;width:215px;height:0.6px;background:#1f1f1f;"></div>
<div class="a" style="left:12.6px;top:438.1px;width:30.8px;height:6.8px;background:#191919;"></div>
<span class="t" style="left:14.4px;top:437.5px;font-size:6px;color:#e6e6e6;transform:scaleX(0.921);">Normal</span>
<svg class="a" style="left:37.6px;top:440.3px;" width="4.4" height="2.6" viewBox="0 0 4.4 2.6"><path d="M0 0 H4.4 L2.2 2.6 Z" fill="#e6e6e6"/></svg>
<div class="a" style="left:46px;top:438.3px;width:6px;height:6.4px;background:#191919;"></div>
<div class="a" style="left:55.6px;top:438.1px;width:30px;height:6.8px;background:#191919;"></div>
<span class="t" style="left:58px;top:437.5px;font-size:6px;color:#e6e6e6;transform:scaleX(0.865);">None</span>
<svg class="a" style="left:79.2px;top:440.3px;" width="4.4" height="2.6" viewBox="0 0 4.4 2.6"><path d="M0 0 H4.4 L2.2 2.6 Z" fill="#e6e6e6"/></svg>
<svg class="a" style="left:89.8px;top:438.6px;" width="5.6" height="5.6" viewBox="0 0 6 6"><path d="M0.4 4 Q0.4 0.8 3 0.8 Q5.6 0.8 5.6 4 Z" fill="#dadada"/><rect x="1.8" y="3.8" width="2.4" height="1.6" fill="#dadada"/><circle cx="3" cy="2.6" r="0.8" fill="#222"/></svg>
<div class="a" style="left:97.4px;top:438.3px;width:4.8px;height:6.4px;background:#191919;"></div>
<svg class="a" style="left:104.2px;top:438.3px;" width="6.4" height="6.4" viewBox="0 0 6.4 6.4"><path d="M0.4 6 L6 0.6" stroke="#f4f4f4" stroke-width="1"/></svg>
<div class="a" style="left:125px;top:438.3px;width:5.4px;height:6.4px;background:#191919;"></div>
<div class="a" style="left:131.8px;top:438.3px;width:5.4px;height:6.4px;background:#191919;"></div>
<svg class="a" style="left:138.8px;top:438.5px;" width="6" height="6" viewBox="0 0 6 6"><circle cx="3" cy="3" r="2.5" fill="#333" stroke="#bdbdbd" stroke-width="0.7"/><path d="M3 3 V5.2 M3 3 L1.2 1.9 M3 3 L4.8 1.9" fill="none" stroke="#bdbdbd" stroke-width="0.5"/></svg>
<svg class="a" style="left:152.9px;top:438.6px;" width="5.8" height="5.8" viewBox="0 0 6.4 6.4"><circle cx="3.2" cy="3.2" r="2.6" fill="none" stroke="#a0a0a0" stroke-width="0.9"/><path d="M3.2 3.2 Q4.6 2.6 4.2 4 Q3.2 5 2.2 3.8" fill="none" stroke="#a0a0a0" stroke-width="0.7"/></svg>
<div class="a" style="left:162.8px;top:438.1px;width:42px;height:6.8px;background:#191919;"></div>
<span class="t" style="left:165.2px;top:437.5px;font-size:6px;color:#e6e6e6;transform:scaleX(0.823);">None</span>
<svg class="a" style="left:198px;top:440.3px;" width="4.4" height="2.6" viewBox="0 0 4.4 2.6"><path d="M0 0 H4.4 L2.2 2.6 Z" fill="#e6e6e6"/></svg>
<div class="a" style="left:0px;top:445.5px;width:215px;height:8px;background:#2b2b2b;"></div>
<div class="a" style="left:0px;top:453px;width:215px;height:0.6px;background:#1f1f1f;"></div>
<div class="a" style="left:12.6px;top:446.1px;width:30.8px;height:6.8px;background:#191919;"></div>
<span class="t" style="left:14.4px;top:445.5px;font-size:6px;color:#e6e6e6;transform:scaleX(0.921);">Normal</span>
<svg class="a" style="left:37.6px;top:448.3px;" width="4.4" height="2.6" viewBox="0 0 4.4 2.6"><path d="M0 0 H4.4 L2.2 2.6 Z" fill="#e6e6e6"/></svg>
<div class="a" style="left:46px;top:446.3px;width:6px;height:6.4px;background:#191919;"></div>
<div class="a" style="left:55.6px;top:446.1px;width:30px;height:6.8px;background:#191919;"></div>
<span class="t" style="left:58px;top:445.5px;font-size:6px;color:#e6e6e6;transform:scaleX(0.865);">None</span>
<svg class="a" style="left:79.2px;top:448.3px;" width="4.4" height="2.6" viewBox="0 0 4.4 2.6"><path d="M0 0 H4.4 L2.2 2.6 Z" fill="#e6e6e6"/></svg>
<svg class="a" style="left:89.8px;top:446.6px;" width="5.6" height="5.6" viewBox="0 0 6 6"><path d="M0.4 4 Q0.4 0.8 3 0.8 Q5.6 0.8 5.6 4 Z" fill="#dadada"/><rect x="1.8" y="3.8" width="2.4" height="1.6" fill="#dadada"/><circle cx="3" cy="2.6" r="0.8" fill="#222"/></svg>
<div class="a" style="left:97.4px;top:446.3px;width:4.8px;height:6.4px;background:#191919;"></div>
<svg class="a" style="left:104.2px;top:446.3px;" width="6.4" height="6.4" viewBox="0 0 6.4 6.4"><path d="M0.4 6 L6 0.6" stroke="#f4f4f4" stroke-width="1"/></svg>
<div class="a" style="left:125px;top:446.3px;width:5.4px;height:6.4px;background:#191919;"></div>
<div class="a" style="left:131.8px;top:446.3px;width:5.4px;height:6.4px;background:#191919;"></div>
<svg class="a" style="left:138.8px;top:446.5px;" width="6" height="6" viewBox="0 0 6 6"><circle cx="3" cy="3" r="2.5" fill="#333" stroke="#bdbdbd" stroke-width="0.7"/><path d="M3 3 V5.2 M3 3 L1.2 1.9 M3 3 L4.8 1.9" fill="none" stroke="#bdbdbd" stroke-width="0.5"/></svg>
<svg class="a" style="left:152.9px;top:446.6px;" width="5.8" height="5.8" viewBox="0 0 6.4 6.4"><circle cx="3.2" cy="3.2" r="2.6" fill="none" stroke="#a0a0a0" stroke-width="0.9"/><path d="M3.2 3.2 Q4.6 2.6 4.2 4 Q3.2 5 2.2 3.8" fill="none" stroke="#a0a0a0" stroke-width="0.7"/></svg>
<div class="a" style="left:162.8px;top:446.1px;width:42px;height:6.8px;background:#191919;"></div>
<span class="t" style="left:165.2px;top:445.5px;font-size:6px;color:#e6e6e6;transform:scaleX(0.823);">None</span>
<svg class="a" style="left:198px;top:448.3px;" width="4.4" height="2.6" viewBox="0 0 4.4 2.6"><path d="M0 0 H4.4 L2.2 2.6 Z" fill="#e6e6e6"/></svg>
<div class="a" style="left:213.4px;top:268.8px;width:2px;height:181.2px;background:#111111;"></div>
<div class="a" style="left:215.4px;top:268.8px;width:384.6px;height:181.2px;background:#262626;"></div>
<div class="a" style="left:217.5px;top:271px;width:382.5px;height:3.9px;background:#6d6d6d;"></div>
<svg class="a" style="left:214px;top:270.6px;" width="3.6" height="4.6" viewBox="0 0 3.6 4.6"><path d="M3.6 0 V4.4 H2.4 L0.2 2.2 L2.4 0 Z" fill="#2aa3ea"/></svg>
<div class="a" style="left:215.4px;top:275px;width:384.6px;height:9.6px;background:#262626;"></div>
<div class="a" style="left:217.3px;top:282.4px;width:0.7px;height:1.8px;background:#9a9a9a;"></div>
<span class="t" style="left:215.4px;top:275.2px;font-size:5px;color:#b8b8b8;transform:scaleX(0.769);">0:00s</span>
<div class="a" style="left:306.9px;top:282.4px;width:0.7px;height:1.8px;background:#9a9a9a;"></div>
<span class="t" style="left:303.4px;top:275.2px;font-size:5px;color:#b8b8b8;transform:scaleX(0.868);">01s</span>
<div class="a" style="left:396.5px;top:282.4px;width:0.7px;height:1.8px;background:#9a9a9a;"></div>
<span class="t" style="left:393px;top:275.2px;font-size:5px;color:#b8b8b8;transform:scaleX(0.868);">02s</span>
<div class="a" style="left:486.1px;top:282.4px;width:0.7px;height:1.8px;background:#9a9a9a;"></div>
<span class="t" style="left:482.6px;top:275.2px;font-size:5px;color:#b8b8b8;transform:scaleX(0.868);">03s</span>
<div class="a" style="left:575.7px;top:282.4px;width:0.7px;height:1.8px;background:#9a9a9a;"></div>
<span class="t" style="left:572.2px;top:275.2px;font-size:5px;color:#b8b8b8;transform:scaleX(0.868);">04s</span>
<div class="a" style="left:217.5px;top:284.7px;width:382.5px;height:7.1px;background:#626262;"></div>
<div class="a" style="left:214.4px;top:284.7px;width:3px;height:7px;background:#2aa3ea;border-radius:1.6px 0 0 1.6px;"></div>
<div class="a" style="left:215.4px;top:291.8px;width:384.6px;height:2.6px;background:#151515;"></div>
<div class="a" style="left:217.6px;top:292.2px;width:3.6px;height:1.7px;background:#169c16;"></div>
<div class="a" style="left:235px;top:292.2px;width:7.6px;height:1.7px;background:#169c16;"></div>
<div class="a" style="left:250px;top:292.2px;width:3.6px;height:1.7px;background:#169c16;"></div>
<div class="a" style="left:267.6px;top:292.2px;width:3.4px;height:1.7px;background:#169c16;"></div>
<div class="a" style="left:274.6px;top:292.2px;width:7.4px;height:1.7px;background:#169c16;"></div>
<div class="a" style="left:365px;top:292.2px;width:3.4px;height:1.7px;background:#169c16;"></div>
<div class="a" style="left:375px;top:292.2px;width:3.6px;height:1.7px;background:#169c16;"></div>
<div class="a" style="left:400px;top:292.2px;width:4px;height:1.7px;background:#169c16;"></div>
<div class="a" style="left:468.4px;top:292.2px;width:4px;height:1.7px;background:#169c16;"></div>
<div class="a" style="left:479px;top:292.2px;width:4px;height:1.7px;background:#169c16;"></div>
<div class="a" style="left:565px;top:292.2px;width:4px;height:1.7px;background:#169c16;"></div>
<div class="a" style="left:217.5px;top:294.3px;width:382.5px;height:7.6px;background:#7b3b3b;"></div>
<div class="a" style="left:217.5px;top:294.3px;width:382.5px;height:0.8px;background:#874040;"></div>
<div class="a" style="left:215.4px;top:301.9px;width:384.6px;height:0.8px;background:#222a2a;"></div>
<div class="a" style="left:217.4px;top:302.6px;width:382.6px;height:7px;background:#333333;"></div>
<div class="a" style="left:217.4px;top:309.6px;width:382.6px;height:1px;background:#292929;"></div>
<div class="a" style="left:217.4px;top:310.6px;width:382.6px;height:7px;background:#333333;"></div>
<div class="a" style="left:217.4px;top:317.6px;width:382.6px;height:1px;background:#292929;"></div>
<div class="a" style="left:217.4px;top:318.6px;width:382.6px;height:7px;background:#333333;"></div>
<div class="a" style="left:217.4px;top:325.6px;width:382.6px;height:1px;background:#292929;"></div>
<div class="a" style="left:217.4px;top:326.6px;width:382.6px;height:7px;background:#333333;"></div>
<div class="a" style="left:217.4px;top:333.6px;width:382.6px;height:1px;background:#292929;"></div>
<div class="a" style="left:215.4px;top:302px;width:2.1px;height:148px;background:#2a2a2a;"></div>
<div class="a" style="left:217.5px;top:334px;width:382.5px;height:7.3px;background:#958188;"></div>
<div class="a" style="left:217.5px;top:334px;width:382.5px;height:0.7px;background:#a28e94;"></div>
<div class="a" style="left:217.5px;top:340.6px;width:382.5px;height:0.7px;background:#a28e94;"></div>
<div class="a" style="left:217.5px;top:341.4px;width:382.5px;height:0.8px;background:#1c1c1c;"></div>
<div class="a" style="left:217.5px;top:342.6px;width:382.5px;height:7.1px;background:#333333;"></div>
<div class="a" style="left:217.5px;top:349.7px;width:382.5px;height:100.3px;background:#9b578b;"></div>
<div class="a" style="left:217.5px;top:357px;width:382.5px;height:1px;background:#633b5a;"></div>
<div class="a" style="left:217.5px;top:365px;width:382.5px;height:1px;background:#633b5a;"></div>
<div class="a" style="left:217.5px;top:373px;width:382.5px;height:1px;background:#633b5a;"></div>
<div class="a" style="left:217.5px;top:381px;width:382.5px;height:1px;background:#633b5a;"></div>
<div class="a" style="left:217.5px;top:389px;width:382.5px;height:1px;background:#633b5a;"></div>
<div class="a" style="left:217.5px;top:397px;width:382.5px;height:1px;background:#633b5a;"></div>
<div class="a" style="left:217.5px;top:405px;width:382.5px;height:1px;background:#633b5a;"></div>
<div class="a" style="left:217.5px;top:413px;width:382.5px;height:1px;background:#633b5a;"></div>
<div class="a" style="left:217.5px;top:421px;width:382.5px;height:1px;background:#633b5a;"></div>
<div class="a" style="left:217.5px;top:429px;width:382.5px;height:1px;background:#633b5a;"></div>
<div class="a" style="left:217.5px;top:437px;width:382.5px;height:1px;background:#633b5a;"></div>
<div class="a" style="left:217.5px;top:445px;width:382.5px;height:1px;background:#633b5a;"></div>
<svg class="a" style="left:412.4px;top:319.4px;" width="5.2" height="5.2" viewBox="0 0 5.2 5.2"><path d="M2.6 0.2 L5 2.6 L2.6 5 L0.2 2.6 Z" fill="#d8d8d8"/><path d="M2.6 0.2 L5 2.6 L2.6 5 Z" fill="#6a6a6a"/><path d="M2.9 1.4 L4 2.6 L2.9 3.8 Z" fill="#e8e8e8"/></svg>
<svg class="a" style="left:466px;top:319.4px;" width="5.2" height="5.2" viewBox="0 0 5.2 5.2"><path d="M2.6 0.2 L5 2.6 L2.6 5 L0.2 2.6 Z" fill="#d8d8d8"/><path d="M2.6 0.2 L5 2.6 L2.6 5 Z" fill="#6a6a6a"/><path d="M2.9 1.4 L4 2.6 L2.9 3.8 Z" fill="#e8e8e8"/></svg>
<svg class="a" style="left:215.2px;top:343.4px;" width="5.2" height="5.2" viewBox="0 0 5.2 5.2"><path d="M2.6 0.2 L5 2.6 L2.6 5 L0.2 2.6 Z" fill="#d8d8d8"/><path d="M2.6 0.2 L5 2.6 L2.6 5 Z" fill="#6a6a6a"/><path d="M2.9 1.4 L4 2.6 L2.9 3.8 Z" fill="#e8e8e8"/></svg>
<svg class="a" style="left:258.4px;top:343.4px;" width="5.2" height="5.2" viewBox="0 0 5.2 5.2"><path d="M2.6 0.2 L5 2.6 L2.6 5 L0.2 2.6 Z" fill="#d8d8d8"/><path d="M2.6 0.2 L5 2.6 L2.6 5 Z" fill="#6a6a6a"/><path d="M2.9 1.4 L4 2.6 L2.9 3.8 Z" fill="#e8e8e8"/></svg>
<div class="a" style="left:278.05px;top:271px;width:1px;height:179px;background:#bf1f1f;"></div>
<svg class="a" style="left:277px;top:303.3px;" width="3.4" height="5.6" viewBox="0 0 3.4 5.6"><path d="M0.2 0.2 H3.2 L2.2 2.8 L3.2 5.4 H0.2 L1.2 2.8 Z" fill="#e2a6a6" stroke="#1e3a3a" stroke-width="0.35"/></svg>
<svg class="a" style="left:277px;top:311.1px;" width="3.4" height="5.6" viewBox="0 0 3.4 5.6"><path d="M0.2 0.2 H3.2 L2.2 2.8 L3.2 5.4 H0.2 L1.2 2.8 Z" fill="#e2a6a6" stroke="#1e3a3a" stroke-width="0.35"/></svg>
<svg class="a" style="left:277px;top:326.5px;" width="3.4" height="5.6" viewBox="0 0 3.4 5.6"><path d="M0.2 0.2 H3.2 L2.2 2.8 L3.2 5.4 H0.2 L1.2 2.8 Z" fill="#e2a6a6" stroke="#1e3a3a" stroke-width="0.35"/></svg>
<svg class="a" style="left:275.6px;top:277.4px;" width="6" height="7" viewBox="0 0 6 7"><path d="M1 0.4 H5 Q5.6 0.4 5.6 1 V3.6 L3 6.6 L0.4 3.6 V1 Q0.4 0.4 1 0.4 Z" fill="#4fb6f0" stroke="#1a78b8" stroke-width="0.5"/><path d="M3 1.4 V4.8" stroke="#c8e8fa" stroke-width="0.9"/></svg>
</div></body></html>
